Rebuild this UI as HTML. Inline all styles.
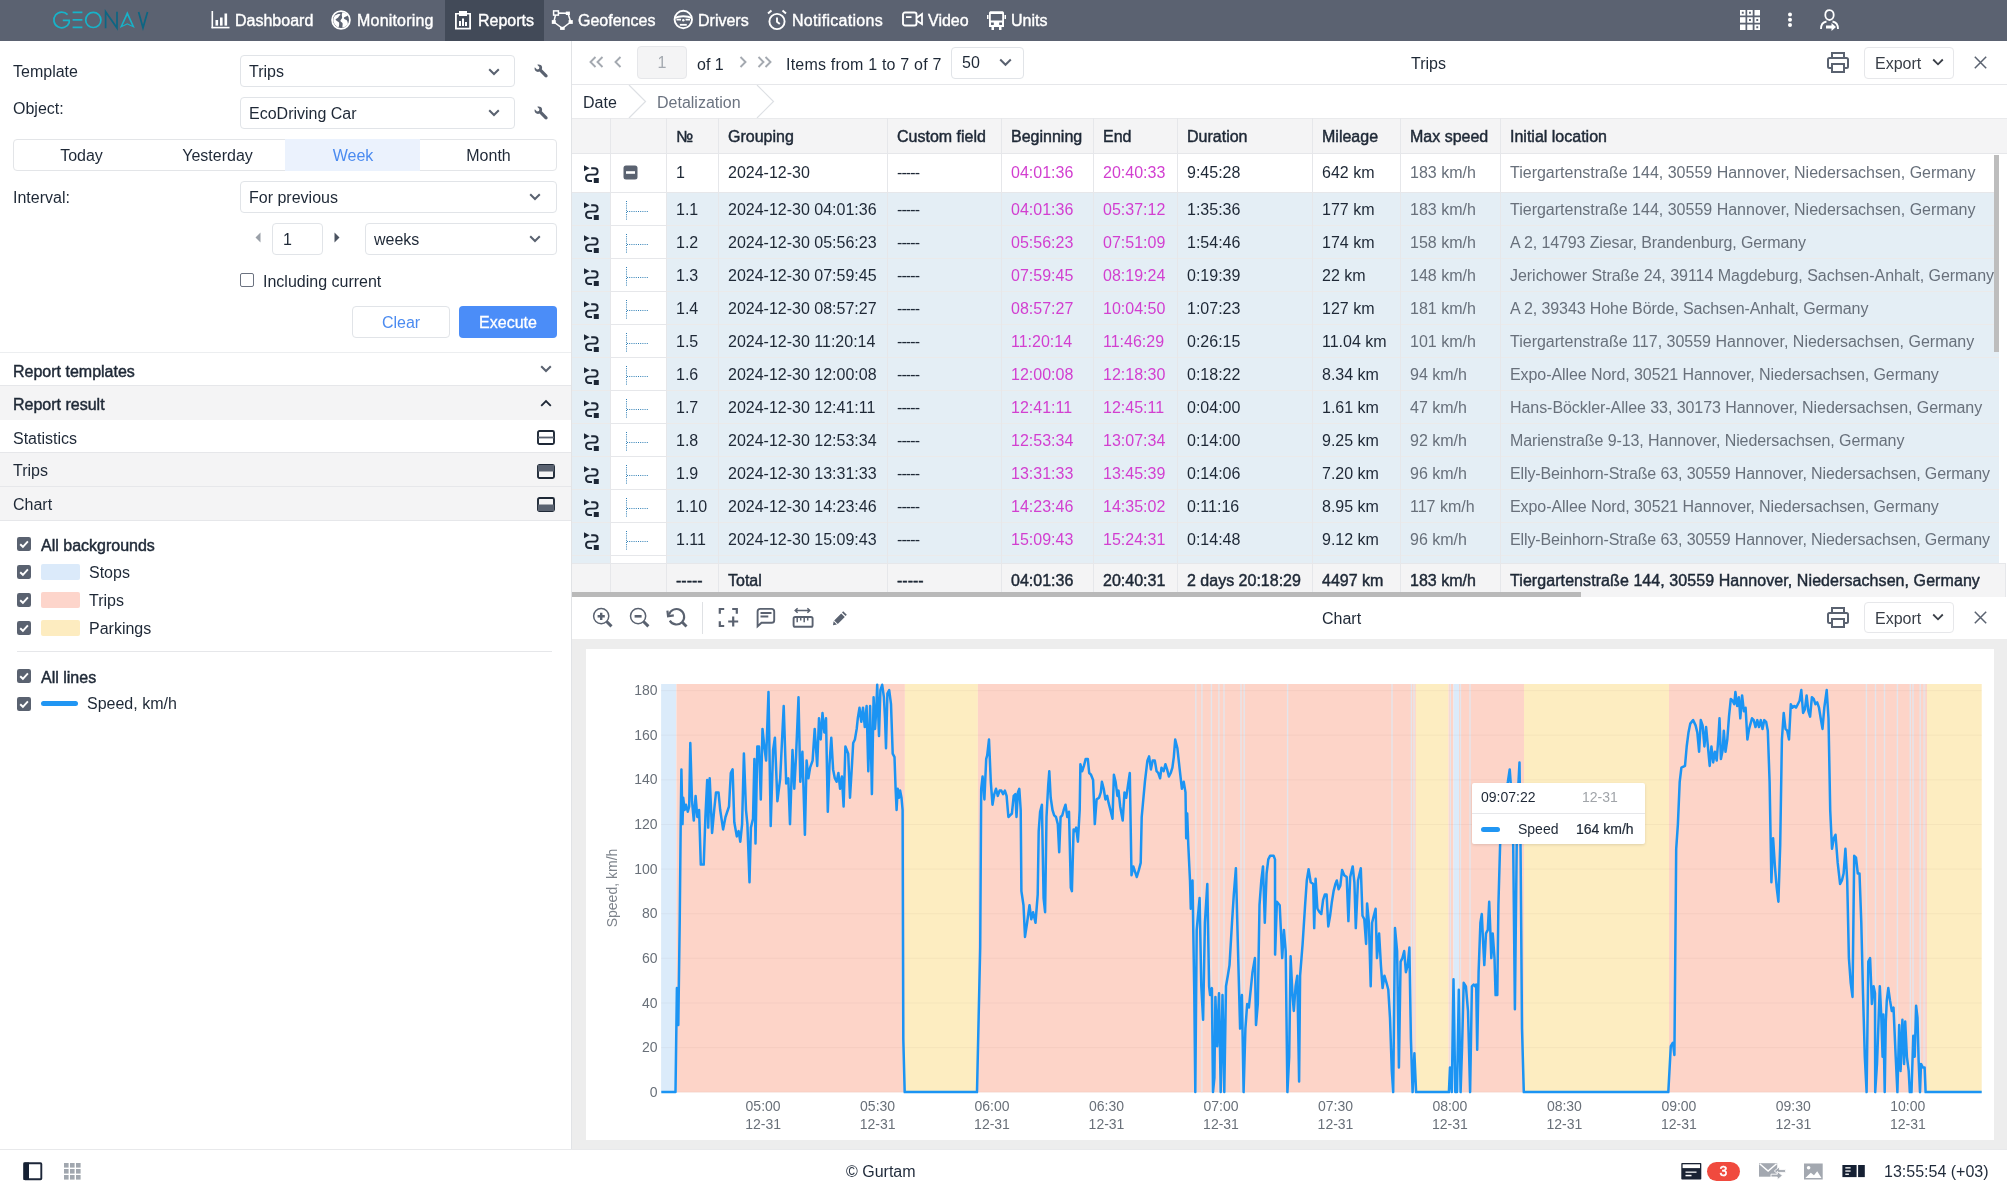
<!DOCTYPE html>
<html><head><meta charset="utf-8"><title>Reports</title>
<style>
*{box-sizing:border-box;margin:0;padding:0}
html,body{width:2007px;height:1192px;overflow:hidden;background:#fff;font-family:"Liberation Sans",sans-serif;color:#1e2836;font-size:16px}
.a{position:absolute}
.t{position:absolute;white-space:nowrap}
svg{display:block}
body{will-change:transform}
/* top bar */
#top{left:0;top:0;width:2007px;height:41px;background:#5b6271}
#top .nav{color:#fff;font-size:16px;height:41px;line-height:41px}
#rep{left:445px;top:0;width:99px;height:41px;background:#424a58}
/* left panel */
#left{left:0;top:41px;width:572px;height:1108px;background:#fff;border-right:1px solid #e1e3e6}
.lbl{font-size:16px;color:#1e2836;line-height:20px}
.sel{border:1px solid #e1e4e8;border-radius:4px;background:#fff}
.sel .v{position:absolute;left:8px;top:1px;line-height:30px;font-size:16px}
.chev{position:absolute;width:12px;height:8px}
.row{position:absolute;left:0;width:571px;line-height:33px;font-size:16px;padding-left:13px}
.cb{position:absolute;width:14px;height:14px;border-radius:2px;background:#5a6270}
/* right */
.hd{position:absolute;top:118px;height:36px;background:#f4f4f5;border-right:1px solid #e6e7ea;border-bottom:1px solid #e6e7ea;font-weight:bold;line-height:35px;padding-left:10px;color:#1e2836}
</style></head><body>

<!-- TOP BAR -->
<div id="top" class="a"></div>
<div id="rep" class="a"></div>
<!-- logo -->
<svg class="a" style="left:0;top:0" width="160" height="41" viewBox="0 0 160 41">
 <g fill="none" stroke-width="1.7">
  <path d="M67.6 14.6 A7.9 7.9 0 1 0 69.2 22.6 V20.4 H62.8" stroke="#17b3c9"/>
  <path d="M72.6 12.4 H82.4 M72.6 19.9 H82.4 M72.6 27.3 H82.4" stroke="#17b3c9"/>
  <circle cx="93.3" cy="19.9" r="7.6" stroke="#17b3c9"/>
  <path d="M105.6 28.2 V11.7 L117 28 V11.7" stroke="#0c6683"/>
  <path d="M138.6 11.9 L143 27.8 L147.5 11.9" stroke="#0c6683"/>
 </g>
 <path d="M127.3 11.3 L134.8 28.1 L127.3 24.6 L119.8 28.1 Z M127.3 15.6 L122.6 25.6 L127.3 23.3 L132 25.6 Z" fill="#17b3c9" fill-rule="evenodd"/>
</svg>
<!-- nav icons -->
<svg class="a" style="left:211px;top:11px" width="19" height="18" viewBox="0 0 19 18" fill="#fff">
 <rect x="0.5" y="0" width="1.6" height="17.2"/><rect x="0.5" y="15.8" width="18" height="1.6"/>
 <rect x="4.5" y="9" width="2.6" height="5.6"/><rect x="9" y="6.5" width="2.6" height="8.1"/><rect x="13.5" y="2.5" width="2.6" height="12.1"/>
</svg>
<div class="t nav" style="left:235px;top:0;color:#fff;line-height:41px;-webkit-text-stroke:0.4px #fff">Dashboard</div>
<svg class="a" style="left:331px;top:10px" width="20" height="20" viewBox="0 0 20 20">
 <circle cx="10" cy="10" r="8.9" fill="none" stroke="#fff" stroke-width="1.8"/>
 <path d="M4 5.5 C6 4 8 3.5 9.5 4.2 C9 5.5 8 6 7.2 7.5 C6.5 8.5 5 8.5 4.5 9.8 C5.5 11 7 11.5 8 12.5 C8.5 14 8 16 7.5 17.5 C5 16.5 3 14 2.3 11 C2.2 9 2.8 7 4 5.5 Z M11.5 2.2 C13.5 2.5 15.5 3.5 16.8 5.2 C16 6.5 14 6.5 13 7.5 C12.2 8.5 14 9.5 15.5 10 C16.5 11 17 12.5 16.8 14.5 C15.5 16 13.5 17.2 11.5 17.6 C11.2 16 12 14.5 11.5 13 C10.5 12 9 11.5 9.5 10.2 C10.5 9 11.5 8.2 11 6.5 C10.5 5 11 3.5 11.5 2.2 Z" fill="#fff"/>
</svg>
<div class="t nav" style="left:357px;top:0;color:#fff;line-height:41px;-webkit-text-stroke:0.4px #fff;letter-spacing:0.2px">Monitoring</div>
<svg class="a" style="left:454px;top:10px" width="18" height="20" viewBox="0 0 18 20" fill="#fff">
 <path d="M1 3 H5 V1 H13 V3 H17 V19.5 H1 Z M2.8 4.6 V17.8 H15.2 V4.6 H13 V6 H5 V4.6 Z" fill-rule="evenodd"/>
 <rect x="5" y="11" width="2" height="5"/><rect x="8" y="8.5" width="2" height="7.5"/><rect x="11" y="12" width="2" height="4"/>
</svg>
<div class="t nav" style="left:478px;top:0;color:#fff;line-height:41px;-webkit-text-stroke:0.4px #fff">Reports</div>
<svg class="a" style="left:540px;top:0" width="40" height="41" viewBox="540 0 40 41">
 <path d="M556 13 L568 13.3 L570.7 22 L562.4 28.4 L553.8 22 Z" fill="none" stroke="#fff" stroke-width="1.5"/>
 <rect x="553.6" y="10.9" width="4.8" height="4.2" fill="#5b6271" stroke="#fff" stroke-width="1.5"/>
 <rect x="565.8" y="11.6" width="4.1" height="3.4" fill="#fff"/>
 <rect x="568.6" y="20.1" width="4.2" height="3.8" fill="#fff"/>
 <rect x="560.1" y="26.8" width="4.6" height="3.1" fill="#fff"/>
 <rect x="551.8" y="20.1" width="4" height="3.8" fill="#fff"/>
</svg>
<div class="t nav" style="left:578px;top:0;color:#fff;line-height:41px;-webkit-text-stroke:0.4px #fff">Geofences</div>
<svg class="a" style="left:670px;top:6px" width="26" height="26" viewBox="670 6 26 26">
 <circle cx="683.3" cy="19.5" r="8.7" fill="none" stroke="#fff" stroke-width="1.9"/>
 <path d="M675 17.8 C679 15.6 687.6 15.6 691.6 17.8" fill="none" stroke="#fff" stroke-width="2"/>
 <path d="M676.5 19.6 H681 M685.6 19.6 H690" stroke="#fff" stroke-width="1.6"/>
 <circle cx="683.3" cy="20.3" r="1.2" fill="#fff"/>
 <path d="M679.8 24.8 H686.8" stroke="#fff" stroke-width="1.8"/>
</svg>
<div class="t nav" style="left:698px;top:0;color:#fff;line-height:41px;-webkit-text-stroke:0.4px #fff">Drivers</div>
<svg class="a" style="left:767px;top:9px" width="20" height="22" viewBox="0 0 20 22">
 <circle cx="10" cy="12.5" r="7.6" fill="none" stroke="#fff" stroke-width="1.9"/>
 <path d="M10 8.5 V12.8 L12.8 15" fill="none" stroke="#fff" stroke-width="1.9"/>
 <path d="M1 4.5 L4.5 1.5 M19 4.5 L15.5 1.5" stroke="#fff" stroke-width="2"/>
</svg>
<div class="t nav" style="left:792px;top:0;color:#fff;line-height:41px;-webkit-text-stroke:0.4px #fff;letter-spacing:0.3px">Notifications</div>
<svg class="a" style="left:902px;top:11px" width="21" height="17" viewBox="0 0 21 17">
 <rect x="1" y="1.5" width="13.5" height="13" rx="2" fill="none" stroke="#fff" stroke-width="1.9"/>
 <path d="M14.5 7 L20 3 V13 L14.5 9.5" fill="none" stroke="#fff" stroke-width="1.8"/>
 <rect x="4" y="5.2" width="5.5" height="1.8" fill="#fff"/>
</svg>
<div class="t nav" style="left:928px;top:0;color:#fff;line-height:41px;-webkit-text-stroke:0.4px #fff">Video</div>
<svg class="a" style="left:987px;top:11px" width="19" height="20" viewBox="0 0 19 20" fill="#fff">
 <path d="M2 2 C2 0.8 3 0.3 4 0.3 H15 C16 0.3 17 0.8 17 2 V16 H14.5 V19 H12 V16 H7 V19 H4.5 V16 H2 Z M3.8 3 V9.5 H15.2 V3 Z M4 11.5 V14 H6.8 V11.5 Z M12.2 11.5 V14 H15 V11.5 Z" fill-rule="evenodd"/>
 <rect x="0" y="4" width="1.5" height="4"/><rect x="17.5" y="4" width="1.5" height="4"/>
</svg>
<div class="t nav" style="left:1011px;top:0;color:#fff;line-height:41px;-webkit-text-stroke:0.4px #fff">Units</div>
<!-- right icons -->
<svg class="a" style="left:1740px;top:10px" width="20" height="20" viewBox="0 0 20 20" fill="#fff">
 <path d="M0 0H5.5V5.5H0Z M1.8 1.8V3.7H3.7V1.8Z" fill-rule="evenodd"/>
 <path d="M7.2 0H12.7V5.5H7.2Z M9 1.8V3.7H10.9V1.8Z" fill-rule="evenodd"/>
 <rect x="14.5" y="0" width="5.5" height="5.5"/>
 <rect x="0" y="7.2" width="5.5" height="5.5"/>
 <path d="M7.2 7.2H12.7V12.7H7.2Z M9 9V10.9H10.9V9Z" fill-rule="evenodd"/>
 <path d="M14.5 7.2H20V12.7H14.5Z M16.3 9V10.9H18.2V9Z" fill-rule="evenodd"/>
 <rect x="0" y="14.5" width="5.5" height="5.5"/>
 <rect x="7.2" y="14.5" width="5.5" height="5.5"/>
 <path d="M14.5 14.5H20V20H14.5Z M16.3 16.3V18.2H18.2V16.3Z" fill-rule="evenodd"/>
</svg>
<svg class="a" style="left:1787px;top:12px" width="6" height="18" viewBox="0 0 6 18" fill="#fff">
 <circle cx="3" cy="2.5" r="2"/><circle cx="3" cy="7.8" r="2"/><circle cx="3" cy="13" r="2"/>
</svg>
<svg class="a" style="left:1820px;top:9px" width="19" height="23" viewBox="0 0 19 23">
 <path d="M9.5 1.2 C6.8 1.2 5.3 3.2 5.3 6 C5.3 8.8 7 11 9.5 11 C12 11 13.7 8.8 13.7 6 C13.7 3.2 12.2 1.2 9.5 1.2 Z" fill="none" stroke="#fff" stroke-width="1.8"/>
 <path d="M1 20 C1 15.5 3.5 13 6.5 12.5 M18 20 C18 15.5 15.5 13 12.5 12.5" fill="none" stroke="#fff" stroke-width="1.8"/>
 <path d="M6 16.5 H11.5 V14 L16 18 L11.5 22 V19.5 H6 Z" fill="#fff"/>
</svg>

<!-- LEFT PANEL -->
<div id="left" class="a"></div>
<div class="t lbl" style="left:13px;top:62px">Template</div>
<div class="a sel" style="left:240px;top:55px;width:275px;height:32px"><div class="v">Trips</div></div>
<svg class="a" style="left:488px;top:68px" width="12" height="8" viewBox="0 0 12 8"><path d="M1.2 1.2 L6 6 L10.8 1.2" fill="none" stroke="#5a6270" stroke-width="2"/></svg>
<svg class="a" style="left:534px;top:64px" width="14" height="14" viewBox="0 0 14 14"><path transform="translate(14 0) scale(-1 1)" d="M13.2 3.2 L11 5.4 L9 5 L8.6 3 L10.8 0.8 C9 0 6.8 0.6 6.1 2.4 C5.7 3.4 5.8 4.4 6.2 5.3 L0.8 10.7 C0.2 11.3 0.2 12.4 0.8 13 C1.4 13.6 2.5 13.6 3.1 13 L8.5 7.6 C9.4 8 10.5 8.1 11.5 7.6 C13.2 6.8 13.8 4.8 13.2 3.2 Z" fill="#5a6270"/></svg>
<div class="t lbl" style="left:13px;top:99px">Object:</div>
<div class="a sel" style="left:240px;top:97px;width:275px;height:32px"><div class="v">EcoDriving Car</div></div>
<svg class="a" style="left:488px;top:109px" width="12" height="8" viewBox="0 0 12 8"><path d="M1.2 1.2 L6 6 L10.8 1.2" fill="none" stroke="#5a6270" stroke-width="2"/></svg>
<svg class="a" style="left:534px;top:106px" width="14" height="14" viewBox="0 0 14 14"><path transform="translate(14 0) scale(-1 1)" d="M13.2 3.2 L11 5.4 L9 5 L8.6 3 L10.8 0.8 C9 0 6.8 0.6 6.1 2.4 C5.7 3.4 5.8 4.4 6.2 5.3 L0.8 10.7 C0.2 11.3 0.2 12.4 0.8 13 C1.4 13.6 2.5 13.6 3.1 13 L8.5 7.6 C9.4 8 10.5 8.1 11.5 7.6 C13.2 6.8 13.8 4.8 13.2 3.2 Z" fill="#5a6270"/></svg>
<!-- period segmented -->
<div class="a" style="left:13px;top:139px;width:544px;height:32px;border:1px solid #e3e5e8;border-radius:4px;background:#fff"></div>
<div class="a" style="left:285px;top:139px;width:135px;height:32px;background:#ebf2fd"></div>
<div class="t lbl" style="left:13px;top:145px;width:137px;text-align:center;line-height:22px">Today</div>
<div class="t lbl" style="left:149px;top:145px;width:137px;text-align:center;line-height:22px">Yesterday</div>
<div class="t lbl" style="left:286px;top:145px;width:134px;text-align:center;line-height:22px;color:#4b8bf0">Week</div>
<div class="t lbl" style="left:420px;top:145px;width:137px;text-align:center;line-height:22px">Month</div>
<div class="t lbl" style="left:13px;top:188px">Interval:</div>
<div class="a sel" style="left:240px;top:181px;width:317px;height:32px"><div class="v">For previous</div></div>
<svg class="a" style="left:529px;top:193px" width="12" height="8" viewBox="0 0 12 8"><path d="M1.2 1.2 L6 6 L10.8 1.2" fill="none" stroke="#5a6270" stroke-width="2"/></svg>
<svg class="a" style="left:255px;top:232px" width="6" height="11" viewBox="0 0 6 11"><path d="M5.5 0.5 V10.5 L0.5 5.5 Z" fill="#9aa0a8"/></svg>
<div class="a sel" style="left:272px;top:223px;width:51px;height:32px"><div class="v" style="left:10px">1</div></div>
<svg class="a" style="left:334px;top:232px" width="6" height="11" viewBox="0 0 6 11"><path d="M0.5 0.5 V10.5 L5.5 5.5 Z" fill="#4a5260"/></svg>
<div class="a sel" style="left:365px;top:223px;width:192px;height:32px"><div class="v">weeks</div></div>
<svg class="a" style="left:529px;top:235px" width="12" height="8" viewBox="0 0 12 8"><path d="M1.2 1.2 L6 6 L10.8 1.2" fill="none" stroke="#5a6270" stroke-width="2"/></svg>
<div class="a" style="left:240px;top:273px;width:14px;height:14px;border:1.5px solid #6b7280;border-radius:2px"></div>
<div class="t lbl" style="left:263px;top:272px">Including current</div>
<div class="a" style="left:352px;top:306px;width:98px;height:32px;border:1px solid #e1e4e8;border-radius:4px;text-align:center;line-height:32px;color:#4b8bf0">Clear</div>
<div class="a" style="left:459px;top:306px;width:98px;height:32px;border-radius:4px;background:#4b8df8;text-align:center;line-height:34px;color:#fff;-webkit-text-stroke:0.3px #fff">Execute</div>
<div class="a" style="left:0;top:352px;width:571px;height:1px;background:#eceef0"></div>
<!-- accordion -->
<div class="row" style="top:353px;height:33px;padding-top:2px;background:#fff;border-bottom:1px solid #e6e7ea;-webkit-text-stroke:0.45px #1e2836">Report templates</div>
<svg class="a" style="left:540px;top:365px" width="12" height="8" viewBox="0 0 12 8"><path d="M1.2 1.2 L6 6 L10.8 1.2" fill="none" stroke="#5a6270" stroke-width="2"/></svg>
<div class="row" style="top:386px;height:34px;padding-top:2px;background:#f4f4f5;-webkit-text-stroke:0.45px #1e2836">Report result</div>
<svg class="a" style="left:540px;top:399px" width="12" height="8" viewBox="0 0 12 8"><path d="M1.2 6.8 L6 2 L10.8 6.8" fill="none" stroke="#1e2836" stroke-width="1.8"/></svg>
<div class="row" style="top:420px;height:33px;padding-top:2px;background:#fff;border-bottom:1px solid #e6e7ea">Statistics</div>
<svg class="a" style="left:537px;top:430px" width="18" height="15" viewBox="0 0 18 15"><rect x="1" y="1" width="16" height="13" rx="1.5" fill="none" stroke="#1e2836" stroke-width="1.9"/><rect x="1" y="6.6" width="16" height="1.8" fill="#5a6270"/></svg>
<div class="row" style="top:453px;height:34px;padding-top:1px;background:#f4f4f5;border-bottom:1px solid #e6e7ea">Trips</div>
<svg class="a" style="left:537px;top:464px" width="18" height="15" viewBox="0 0 18 15"><rect x="1" y="1" width="16" height="13" rx="1.5" fill="none" stroke="#1e2836" stroke-width="1.9"/><rect x="1" y="1" width="16" height="6.5" fill="#5a6270"/></svg>
<div class="row" style="top:487px;height:34px;padding-top:1px;background:#f4f4f5;border-bottom:1px solid #e6e7ea">Chart</div>
<svg class="a" style="left:537px;top:497px" width="18" height="15" viewBox="0 0 18 15"><rect x="1" y="1" width="16" height="13" rx="1.5" fill="none" stroke="#1e2836" stroke-width="1.9"/><rect x="1" y="7.5" width="16" height="6.5" fill="#5a6270"/></svg>
<!-- legend -->
<svg class="a" style="left:17px;top:537px" width="14" height="14" viewBox="0 0 14 14"><rect width="14" height="14" rx="2.2" fill="#5a6270"/><path d="M3.2 7.2 L5.9 9.8 L10.9 4.4" fill="none" stroke="#fff" stroke-width="1.9"/></svg>
<div class="t lbl" style="left:41px;top:536px;-webkit-text-stroke:0.45px #1e2836">All backgrounds</div>
<svg class="a" style="left:17px;top:565px" width="14" height="14" viewBox="0 0 14 14"><rect width="14" height="14" rx="2.2" fill="#5a6270"/><path d="M3.2 7.2 L5.9 9.8 L10.9 4.4" fill="none" stroke="#fff" stroke-width="1.9"/></svg>
<div class="a" style="left:41px;top:564px;width:39px;height:16px;border-radius:2px;background:#dbeafa"></div>
<div class="t lbl" style="left:89px;top:563px">Stops</div>
<svg class="a" style="left:17px;top:593px" width="14" height="14" viewBox="0 0 14 14"><rect width="14" height="14" rx="2.2" fill="#5a6270"/><path d="M3.2 7.2 L5.9 9.8 L10.9 4.4" fill="none" stroke="#fff" stroke-width="1.9"/></svg>
<div class="a" style="left:41px;top:592px;width:39px;height:16px;border-radius:2px;background:#fdd5cb"></div>
<div class="t lbl" style="left:89px;top:591px">Trips</div>
<svg class="a" style="left:17px;top:621px" width="14" height="14" viewBox="0 0 14 14"><rect width="14" height="14" rx="2.2" fill="#5a6270"/><path d="M3.2 7.2 L5.9 9.8 L10.9 4.4" fill="none" stroke="#fff" stroke-width="1.9"/></svg>
<div class="a" style="left:41px;top:620px;width:39px;height:16px;border-radius:2px;background:#fdecc0"></div>
<div class="t lbl" style="left:89px;top:619px">Parkings</div>
<div class="a" style="left:17px;top:651px;width:535px;height:1px;background:#e6e7ea"></div>
<svg class="a" style="left:17px;top:669px" width="14" height="14" viewBox="0 0 14 14"><rect width="14" height="14" rx="2.2" fill="#5a6270"/><path d="M3.2 7.2 L5.9 9.8 L10.9 4.4" fill="none" stroke="#fff" stroke-width="1.9"/></svg>
<div class="t lbl" style="left:41px;top:668px;-webkit-text-stroke:0.45px #1e2836">All lines</div>
<svg class="a" style="left:17px;top:697px" width="14" height="14" viewBox="0 0 14 14"><rect width="14" height="14" rx="2.2" fill="#5a6270"/><path d="M3.2 7.2 L5.9 9.8 L10.9 4.4" fill="none" stroke="#fff" stroke-width="1.9"/></svg>
<div class="a" style="left:41px;top:701px;width:37px;height:5px;border-radius:3px;background:#2196f3"></div>
<div class="t lbl" style="left:87px;top:694px">Speed, km/h</div>

<!-- RIGHT PANEL -->
<div class="a" style="left:572px;top:84px;width:1435px;height:1px;background:#e6e7ea"></div>
<svg class="a" style="left:588px;top:56px" width="17" height="12" viewBox="0 0 17 12"><path d="M7.5 1 L2.5 6 L7.5 11 M14.5 1 L9.5 6 L14.5 11" fill="none" stroke="#a4a9b0" stroke-width="1.9"/></svg>
<svg class="a" style="left:613px;top:56px" width="10" height="12" viewBox="0 0 10 12"><path d="M7.5 1 L2.5 6 L7.5 11" fill="none" stroke="#a4a9b0" stroke-width="1.9"/></svg>
<div class="a" style="left:637px;top:46px;width:50px;height:33px;background:#f4f4f5;border:1px solid #e6e7ea;border-radius:4px;text-align:center;line-height:32px;color:#a4a9b0">1</div>
<div class="t" style="left:697px;top:55px;line-height:20px">of 1</div>
<svg class="a" style="left:738px;top:56px" width="10" height="12" viewBox="0 0 10 12"><path d="M2.5 1 L7.5 6 L2.5 11" fill="none" stroke="#a4a9b0" stroke-width="1.9"/></svg>
<svg class="a" style="left:756px;top:56px" width="17" height="12" viewBox="0 0 17 12"><path d="M2.5 1 L7.5 6 L2.5 11 M9.5 1 L14.5 6 L9.5 11" fill="none" stroke="#a4a9b0" stroke-width="1.9"/></svg>
<div class="t" style="left:786px;top:55px;line-height:20px;letter-spacing:0.2px">Items from 1 to 7 of 7</div>
<div class="a sel" style="left:951px;top:47px;width:73px;height:32px"><div class="v" style="left:10px;top:0">50</div></div>
<svg class="a" style="left:999px;top:58px" width="13" height="9" viewBox="0 0 13 9"><path d="M1.2 1.5 L6.5 6.8 L11.8 1.5" fill="none" stroke="#5a6270" stroke-width="2"/></svg>
<div class="t" style="left:1411px;top:54px;line-height:20px">Trips</div>
<svg class="a" style="left:1827px;top:52px" width="22" height="21" viewBox="0 0 22 21"><path d="M5 6 V1 H17 V6" fill="none" stroke="#5a6270" stroke-width="2"/><path d="M4.5 16 H2.5 C1.5 16 1 15.5 1 14.5 V7.5 C1 6.5 1.5 6 2.5 6 H19.5 C20.5 6 21 6.5 21 7.5 V14.5 C21 15.5 20.5 16 19.5 16 H17.5" fill="none" stroke="#5a6270" stroke-width="2"/><rect x="5" y="12" width="12" height="8" fill="none" stroke="#5a6270" stroke-width="2"/></svg>
<div class="a" style="left:1864px;top:47px;width:90px;height:32px;border:1px solid #e6e7ea;border-radius:4px"></div>
<div class="t" style="left:1875px;top:54px;line-height:20px;color:#383e47">Export</div>
<svg class="a" style="left:1932px;top:58px" width="12" height="9" viewBox="0 0 12 9"><path d="M1.2 1.5 L6 6.3 L10.8 1.5" fill="none" stroke="#3a3f47" stroke-width="1.8"/></svg>
<svg class="a" style="left:1974px;top:56px" width="13" height="13" viewBox="0 0 13 13"><path d="M0.8 0.8 L12.2 12.2 M12.2 0.8 L0.8 12.2" stroke="#5a6270" stroke-width="1.5"/></svg>
<div class="t" style="left:583px;top:93px;line-height:20px">Date</div>
<svg class="a" style="left:628px;top:85px" width="20" height="33" viewBox="0 0 20 33"><path d="M1 0 L17.5 16.5 L1 33" fill="none" stroke="#dde0e4" stroke-width="1.2"/></svg>
<div class="t" style="left:657px;top:93px;line-height:20px;color:#6b7380">Detalization</div>
<svg class="a" style="left:756px;top:85px" width="20" height="33" viewBox="0 0 20 33"><path d="M1 0 L17.5 16.5 L1 33" fill="none" stroke="#dde0e4" stroke-width="1.2"/></svg>
<div class="a" style="left:572px;top:118px;width:1435px;height:36px;background:#f4f4f5;border-top:1px solid #e9eaec;border-bottom:1px solid #e6e7ea"></div>
<div class="a" style="left:610px;top:118px;width:1px;height:36px;background:#e6e7ea"></div>
<div class="a" style="left:666px;top:118px;width:1px;height:36px;background:#e6e7ea"></div>
<div class="t" style="left:676px;top:127px;line-height:20px;-webkit-text-stroke:0.45px #1e2836">№</div>
<div class="a" style="left:718px;top:118px;width:1px;height:36px;background:#e6e7ea"></div>
<div class="t" style="left:728px;top:127px;line-height:20px;-webkit-text-stroke:0.45px #1e2836">Grouping</div>
<div class="a" style="left:887px;top:118px;width:1px;height:36px;background:#e6e7ea"></div>
<div class="t" style="left:897px;top:127px;line-height:20px;-webkit-text-stroke:0.45px #1e2836">Custom field</div>
<div class="a" style="left:1001px;top:118px;width:1px;height:36px;background:#e6e7ea"></div>
<div class="t" style="left:1011px;top:127px;line-height:20px;-webkit-text-stroke:0.45px #1e2836">Beginning</div>
<div class="a" style="left:1093px;top:118px;width:1px;height:36px;background:#e6e7ea"></div>
<div class="t" style="left:1103px;top:127px;line-height:20px;-webkit-text-stroke:0.45px #1e2836">End</div>
<div class="a" style="left:1177px;top:118px;width:1px;height:36px;background:#e6e7ea"></div>
<div class="t" style="left:1187px;top:127px;line-height:20px;-webkit-text-stroke:0.45px #1e2836">Duration</div>
<div class="a" style="left:1312px;top:118px;width:1px;height:36px;background:#e6e7ea"></div>
<div class="t" style="left:1322px;top:127px;line-height:20px;-webkit-text-stroke:0.45px #1e2836">Mileage</div>
<div class="a" style="left:1400px;top:118px;width:1px;height:36px;background:#e6e7ea"></div>
<div class="t" style="left:1410px;top:127px;line-height:20px;-webkit-text-stroke:0.45px #1e2836">Max speed</div>
<div class="a" style="left:1500px;top:118px;width:1px;height:36px;background:#e6e7ea"></div>
<div class="t" style="left:1510px;top:127px;line-height:20px;-webkit-text-stroke:0.45px #1e2836">Initial location</div>
<div class="a" style="left:572px;top:154px;width:1427px;height:39px;background:#fff;border-bottom:1px solid #e6e7ea"></div>
<div class="a" style="left:610px;top:154px;width:1px;height:39px;background:#e6e7ea"></div>
<div class="a" style="left:666px;top:154px;width:1px;height:39px;background:#e6e7ea"></div>
<div class="a" style="left:718px;top:154px;width:1px;height:39px;background:#e6e7ea"></div>
<div class="a" style="left:887px;top:154px;width:1px;height:39px;background:#e6e7ea"></div>
<div class="a" style="left:1001px;top:154px;width:1px;height:39px;background:#e6e7ea"></div>
<div class="a" style="left:1093px;top:154px;width:1px;height:39px;background:#e6e7ea"></div>
<div class="a" style="left:1177px;top:154px;width:1px;height:39px;background:#e6e7ea"></div>
<div class="a" style="left:1312px;top:154px;width:1px;height:39px;background:#e6e7ea"></div>
<div class="a" style="left:1400px;top:154px;width:1px;height:39px;background:#e6e7ea"></div>
<div class="a" style="left:1500px;top:154px;width:1px;height:39px;background:#e6e7ea"></div>
<svg class="a" style="left:583px;top:165px" width="17" height="18" viewBox="0 0 17 18"><path d="M1 0.3 L6.6 3.3 L1 6.3 Z" fill="#1d2736"/><path d="M8.2 3.2 H11.3 C13.6 3.2 14.6 4.8 14.6 6.4 C14.6 8.2 13.4 9.6 11.3 9.6 H6.2 C4.2 9.6 3 11 3 12.8 C3 14.6 4.2 16 6.2 16 H9" fill="none" stroke="#1d2736" stroke-width="1.9"/><rect x="10.8" y="13" width="5" height="5" fill="#1d2736"/></svg>
<svg class="a" style="left:623px;top:165px" width="15" height="15" viewBox="0 0 15 15"><rect x="0.5" y="0.5" width="14" height="14" rx="2.5" fill="#5a6270"/><rect x="3" y="6.2" width="9" height="2.6" fill="#fff"/></svg>
<div class="t" style="left:676px;top:163px;line-height:20px;color:#1e2836">1</div>
<div class="t" style="left:728px;top:163px;line-height:20px;color:#1e2836">2024-12-30</div>
<div class="t" style="left:897px;top:163px;line-height:20px;color:#1e2836;letter-spacing:-0.9px">-----</div>
<div class="t" style="left:1011px;top:163px;line-height:20px;color:#d23fd0">04:01:36</div>
<div class="t" style="left:1103px;top:163px;line-height:20px;color:#d23fd0">20:40:33</div>
<div class="t" style="left:1187px;top:163px;line-height:20px;color:#1e2836">9:45:28</div>
<div class="t" style="left:1322px;top:163px;line-height:20px;color:#1e2836">642 km</div>
<div class="t" style="left:1410px;top:163px;line-height:20px;color:#68707b">183 km/h</div>
<div class="t" style="left:1510px;top:163px;line-height:20px;color:#68707b">Tiergartenstraße 144, 30559 Hannover, Niedersachsen, Germany</div>
<div class="a" style="left:572px;top:193px;width:1427px;height:33px;background:#e4eef5;border-bottom:1px solid #ebeaea"></div>
<div class="a" style="left:610px;top:193px;width:56px;height:33px;background:#fff;border-bottom:1px solid #e6e7ea"></div>
<div class="a" style="left:610px;top:193px;width:1px;height:33px;background:#e6e7ea"></div>
<div class="a" style="left:666px;top:193px;width:1px;height:33px;background:#e6e7ea"></div>
<div class="a" style="left:718px;top:193px;width:1px;height:33px;background:#e6e7ea"></div>
<div class="a" style="left:887px;top:193px;width:1px;height:33px;background:#e6e7ea"></div>
<div class="a" style="left:1001px;top:193px;width:1px;height:33px;background:#e6e7ea"></div>
<div class="a" style="left:1093px;top:193px;width:1px;height:33px;background:#e6e7ea"></div>
<div class="a" style="left:1177px;top:193px;width:1px;height:33px;background:#e6e7ea"></div>
<div class="a" style="left:1312px;top:193px;width:1px;height:33px;background:#e6e7ea"></div>
<div class="a" style="left:1400px;top:193px;width:1px;height:33px;background:#e6e7ea"></div>
<div class="a" style="left:1500px;top:193px;width:1px;height:33px;background:#e6e7ea"></div>
<svg class="a" style="left:583px;top:202px" width="17" height="18" viewBox="0 0 17 18"><path d="M1 0.3 L6.6 3.3 L1 6.3 Z" fill="#1d2736"/><path d="M8.2 3.2 H11.3 C13.6 3.2 14.6 4.8 14.6 6.4 C14.6 8.2 13.4 9.6 11.3 9.6 H6.2 C4.2 9.6 3 11 3 12.8 C3 14.6 4.2 16 6.2 16 H9" fill="none" stroke="#1d2736" stroke-width="1.9"/><rect x="10.8" y="13" width="5" height="5" fill="#1d2736"/></svg>
<svg class="a" style="left:625px;top:201px" width="25" height="19" viewBox="0 0 25 19"><path d="M1.5 0 V19 M2 10.5 H24" fill="none" stroke="#2f7fb5" stroke-width="1" stroke-dasharray="1 1.2"/></svg>
<div class="t" style="left:676px;top:200px;line-height:20px;color:#1e2836">1.1</div>
<div class="t" style="left:728px;top:200px;line-height:20px;color:#1e2836">2024-12-30 04:01:36</div>
<div class="t" style="left:897px;top:200px;line-height:20px;color:#1e2836;letter-spacing:-0.9px">-----</div>
<div class="t" style="left:1011px;top:200px;line-height:20px;color:#d23fd0">04:01:36</div>
<div class="t" style="left:1103px;top:200px;line-height:20px;color:#d23fd0">05:37:12</div>
<div class="t" style="left:1187px;top:200px;line-height:20px;color:#1e2836">1:35:36</div>
<div class="t" style="left:1322px;top:200px;line-height:20px;color:#1e2836">177 km</div>
<div class="t" style="left:1410px;top:200px;line-height:20px;color:#68707b">183 km/h</div>
<div class="t" style="left:1510px;top:200px;line-height:20px;color:#68707b">Tiergartenstraße 144, 30559 Hannover, Niedersachsen, Germany</div>
<div class="a" style="left:572px;top:226px;width:1427px;height:33px;background:#e4eef5;border-bottom:1px solid #ebeaea"></div>
<div class="a" style="left:610px;top:226px;width:56px;height:33px;background:#fff;border-bottom:1px solid #e6e7ea"></div>
<div class="a" style="left:610px;top:226px;width:1px;height:33px;background:#e6e7ea"></div>
<div class="a" style="left:666px;top:226px;width:1px;height:33px;background:#e6e7ea"></div>
<div class="a" style="left:718px;top:226px;width:1px;height:33px;background:#e6e7ea"></div>
<div class="a" style="left:887px;top:226px;width:1px;height:33px;background:#e6e7ea"></div>
<div class="a" style="left:1001px;top:226px;width:1px;height:33px;background:#e6e7ea"></div>
<div class="a" style="left:1093px;top:226px;width:1px;height:33px;background:#e6e7ea"></div>
<div class="a" style="left:1177px;top:226px;width:1px;height:33px;background:#e6e7ea"></div>
<div class="a" style="left:1312px;top:226px;width:1px;height:33px;background:#e6e7ea"></div>
<div class="a" style="left:1400px;top:226px;width:1px;height:33px;background:#e6e7ea"></div>
<div class="a" style="left:1500px;top:226px;width:1px;height:33px;background:#e6e7ea"></div>
<svg class="a" style="left:583px;top:235px" width="17" height="18" viewBox="0 0 17 18"><path d="M1 0.3 L6.6 3.3 L1 6.3 Z" fill="#1d2736"/><path d="M8.2 3.2 H11.3 C13.6 3.2 14.6 4.8 14.6 6.4 C14.6 8.2 13.4 9.6 11.3 9.6 H6.2 C4.2 9.6 3 11 3 12.8 C3 14.6 4.2 16 6.2 16 H9" fill="none" stroke="#1d2736" stroke-width="1.9"/><rect x="10.8" y="13" width="5" height="5" fill="#1d2736"/></svg>
<svg class="a" style="left:625px;top:234px" width="25" height="19" viewBox="0 0 25 19"><path d="M1.5 0 V19 M2 10.5 H24" fill="none" stroke="#2f7fb5" stroke-width="1" stroke-dasharray="1 1.2"/></svg>
<div class="t" style="left:676px;top:233px;line-height:20px;color:#1e2836">1.2</div>
<div class="t" style="left:728px;top:233px;line-height:20px;color:#1e2836">2024-12-30 05:56:23</div>
<div class="t" style="left:897px;top:233px;line-height:20px;color:#1e2836;letter-spacing:-0.9px">-----</div>
<div class="t" style="left:1011px;top:233px;line-height:20px;color:#d23fd0">05:56:23</div>
<div class="t" style="left:1103px;top:233px;line-height:20px;color:#d23fd0">07:51:09</div>
<div class="t" style="left:1187px;top:233px;line-height:20px;color:#1e2836">1:54:46</div>
<div class="t" style="left:1322px;top:233px;line-height:20px;color:#1e2836">174 km</div>
<div class="t" style="left:1410px;top:233px;line-height:20px;color:#68707b">158 km/h</div>
<div class="t" style="left:1510px;top:233px;line-height:20px;color:#68707b;letter-spacing:-0.12px">A 2, 14793 Ziesar, Brandenburg, Germany</div>
<div class="a" style="left:572px;top:259px;width:1427px;height:33px;background:#e4eef5;border-bottom:1px solid #ebeaea"></div>
<div class="a" style="left:610px;top:259px;width:56px;height:33px;background:#fff;border-bottom:1px solid #e6e7ea"></div>
<div class="a" style="left:610px;top:259px;width:1px;height:33px;background:#e6e7ea"></div>
<div class="a" style="left:666px;top:259px;width:1px;height:33px;background:#e6e7ea"></div>
<div class="a" style="left:718px;top:259px;width:1px;height:33px;background:#e6e7ea"></div>
<div class="a" style="left:887px;top:259px;width:1px;height:33px;background:#e6e7ea"></div>
<div class="a" style="left:1001px;top:259px;width:1px;height:33px;background:#e6e7ea"></div>
<div class="a" style="left:1093px;top:259px;width:1px;height:33px;background:#e6e7ea"></div>
<div class="a" style="left:1177px;top:259px;width:1px;height:33px;background:#e6e7ea"></div>
<div class="a" style="left:1312px;top:259px;width:1px;height:33px;background:#e6e7ea"></div>
<div class="a" style="left:1400px;top:259px;width:1px;height:33px;background:#e6e7ea"></div>
<div class="a" style="left:1500px;top:259px;width:1px;height:33px;background:#e6e7ea"></div>
<svg class="a" style="left:583px;top:268px" width="17" height="18" viewBox="0 0 17 18"><path d="M1 0.3 L6.6 3.3 L1 6.3 Z" fill="#1d2736"/><path d="M8.2 3.2 H11.3 C13.6 3.2 14.6 4.8 14.6 6.4 C14.6 8.2 13.4 9.6 11.3 9.6 H6.2 C4.2 9.6 3 11 3 12.8 C3 14.6 4.2 16 6.2 16 H9" fill="none" stroke="#1d2736" stroke-width="1.9"/><rect x="10.8" y="13" width="5" height="5" fill="#1d2736"/></svg>
<svg class="a" style="left:625px;top:267px" width="25" height="19" viewBox="0 0 25 19"><path d="M1.5 0 V19 M2 10.5 H24" fill="none" stroke="#2f7fb5" stroke-width="1" stroke-dasharray="1 1.2"/></svg>
<div class="t" style="left:676px;top:266px;line-height:20px;color:#1e2836">1.3</div>
<div class="t" style="left:728px;top:266px;line-height:20px;color:#1e2836">2024-12-30 07:59:45</div>
<div class="t" style="left:897px;top:266px;line-height:20px;color:#1e2836;letter-spacing:-0.9px">-----</div>
<div class="t" style="left:1011px;top:266px;line-height:20px;color:#d23fd0">07:59:45</div>
<div class="t" style="left:1103px;top:266px;line-height:20px;color:#d23fd0">08:19:24</div>
<div class="t" style="left:1187px;top:266px;line-height:20px;color:#1e2836">0:19:39</div>
<div class="t" style="left:1322px;top:266px;line-height:20px;color:#1e2836">22 km</div>
<div class="t" style="left:1410px;top:266px;line-height:20px;color:#68707b">148 km/h</div>
<div class="t" style="left:1510px;top:266px;line-height:20px;color:#68707b;letter-spacing:-0.035px">Jerichower Straße 24, 39114 Magdeburg, Sachsen-Anhalt, Germany</div>
<div class="a" style="left:572px;top:292px;width:1427px;height:33px;background:#e4eef5;border-bottom:1px solid #ebeaea"></div>
<div class="a" style="left:610px;top:292px;width:56px;height:33px;background:#fff;border-bottom:1px solid #e6e7ea"></div>
<div class="a" style="left:610px;top:292px;width:1px;height:33px;background:#e6e7ea"></div>
<div class="a" style="left:666px;top:292px;width:1px;height:33px;background:#e6e7ea"></div>
<div class="a" style="left:718px;top:292px;width:1px;height:33px;background:#e6e7ea"></div>
<div class="a" style="left:887px;top:292px;width:1px;height:33px;background:#e6e7ea"></div>
<div class="a" style="left:1001px;top:292px;width:1px;height:33px;background:#e6e7ea"></div>
<div class="a" style="left:1093px;top:292px;width:1px;height:33px;background:#e6e7ea"></div>
<div class="a" style="left:1177px;top:292px;width:1px;height:33px;background:#e6e7ea"></div>
<div class="a" style="left:1312px;top:292px;width:1px;height:33px;background:#e6e7ea"></div>
<div class="a" style="left:1400px;top:292px;width:1px;height:33px;background:#e6e7ea"></div>
<div class="a" style="left:1500px;top:292px;width:1px;height:33px;background:#e6e7ea"></div>
<svg class="a" style="left:583px;top:301px" width="17" height="18" viewBox="0 0 17 18"><path d="M1 0.3 L6.6 3.3 L1 6.3 Z" fill="#1d2736"/><path d="M8.2 3.2 H11.3 C13.6 3.2 14.6 4.8 14.6 6.4 C14.6 8.2 13.4 9.6 11.3 9.6 H6.2 C4.2 9.6 3 11 3 12.8 C3 14.6 4.2 16 6.2 16 H9" fill="none" stroke="#1d2736" stroke-width="1.9"/><rect x="10.8" y="13" width="5" height="5" fill="#1d2736"/></svg>
<svg class="a" style="left:625px;top:300px" width="25" height="19" viewBox="0 0 25 19"><path d="M1.5 0 V19 M2 10.5 H24" fill="none" stroke="#2f7fb5" stroke-width="1" stroke-dasharray="1 1.2"/></svg>
<div class="t" style="left:676px;top:299px;line-height:20px;color:#1e2836">1.4</div>
<div class="t" style="left:728px;top:299px;line-height:20px;color:#1e2836">2024-12-30 08:57:27</div>
<div class="t" style="left:897px;top:299px;line-height:20px;color:#1e2836;letter-spacing:-0.9px">-----</div>
<div class="t" style="left:1011px;top:299px;line-height:20px;color:#d23fd0">08:57:27</div>
<div class="t" style="left:1103px;top:299px;line-height:20px;color:#d23fd0">10:04:50</div>
<div class="t" style="left:1187px;top:299px;line-height:20px;color:#1e2836">1:07:23</div>
<div class="t" style="left:1322px;top:299px;line-height:20px;color:#1e2836">127 km</div>
<div class="t" style="left:1410px;top:299px;line-height:20px;color:#68707b">181 km/h</div>
<div class="t" style="left:1510px;top:299px;line-height:20px;color:#68707b;letter-spacing:-0.1px">A 2, 39343 Hohe Börde, Sachsen-Anhalt, Germany</div>
<div class="a" style="left:572px;top:325px;width:1427px;height:33px;background:#e4eef5;border-bottom:1px solid #ebeaea"></div>
<div class="a" style="left:610px;top:325px;width:56px;height:33px;background:#fff;border-bottom:1px solid #e6e7ea"></div>
<div class="a" style="left:610px;top:325px;width:1px;height:33px;background:#e6e7ea"></div>
<div class="a" style="left:666px;top:325px;width:1px;height:33px;background:#e6e7ea"></div>
<div class="a" style="left:718px;top:325px;width:1px;height:33px;background:#e6e7ea"></div>
<div class="a" style="left:887px;top:325px;width:1px;height:33px;background:#e6e7ea"></div>
<div class="a" style="left:1001px;top:325px;width:1px;height:33px;background:#e6e7ea"></div>
<div class="a" style="left:1093px;top:325px;width:1px;height:33px;background:#e6e7ea"></div>
<div class="a" style="left:1177px;top:325px;width:1px;height:33px;background:#e6e7ea"></div>
<div class="a" style="left:1312px;top:325px;width:1px;height:33px;background:#e6e7ea"></div>
<div class="a" style="left:1400px;top:325px;width:1px;height:33px;background:#e6e7ea"></div>
<div class="a" style="left:1500px;top:325px;width:1px;height:33px;background:#e6e7ea"></div>
<svg class="a" style="left:583px;top:334px" width="17" height="18" viewBox="0 0 17 18"><path d="M1 0.3 L6.6 3.3 L1 6.3 Z" fill="#1d2736"/><path d="M8.2 3.2 H11.3 C13.6 3.2 14.6 4.8 14.6 6.4 C14.6 8.2 13.4 9.6 11.3 9.6 H6.2 C4.2 9.6 3 11 3 12.8 C3 14.6 4.2 16 6.2 16 H9" fill="none" stroke="#1d2736" stroke-width="1.9"/><rect x="10.8" y="13" width="5" height="5" fill="#1d2736"/></svg>
<svg class="a" style="left:625px;top:333px" width="25" height="19" viewBox="0 0 25 19"><path d="M1.5 0 V19 M2 10.5 H24" fill="none" stroke="#2f7fb5" stroke-width="1" stroke-dasharray="1 1.2"/></svg>
<div class="t" style="left:676px;top:332px;line-height:20px;color:#1e2836">1.5</div>
<div class="t" style="left:728px;top:332px;line-height:20px;color:#1e2836">2024-12-30 11:20:14</div>
<div class="t" style="left:897px;top:332px;line-height:20px;color:#1e2836;letter-spacing:-0.9px">-----</div>
<div class="t" style="left:1011px;top:332px;line-height:20px;color:#d23fd0">11:20:14</div>
<div class="t" style="left:1103px;top:332px;line-height:20px;color:#d23fd0">11:46:29</div>
<div class="t" style="left:1187px;top:332px;line-height:20px;color:#1e2836">0:26:15</div>
<div class="t" style="left:1322px;top:332px;line-height:20px;color:#1e2836">11.04 km</div>
<div class="t" style="left:1410px;top:332px;line-height:20px;color:#68707b">101 km/h</div>
<div class="t" style="left:1510px;top:332px;line-height:20px;color:#68707b">Tiergartenstraße 117, 30559 Hannover, Niedersachsen, Germany</div>
<div class="a" style="left:572px;top:358px;width:1427px;height:33px;background:#e4eef5;border-bottom:1px solid #ebeaea"></div>
<div class="a" style="left:610px;top:358px;width:56px;height:33px;background:#fff;border-bottom:1px solid #e6e7ea"></div>
<div class="a" style="left:610px;top:358px;width:1px;height:33px;background:#e6e7ea"></div>
<div class="a" style="left:666px;top:358px;width:1px;height:33px;background:#e6e7ea"></div>
<div class="a" style="left:718px;top:358px;width:1px;height:33px;background:#e6e7ea"></div>
<div class="a" style="left:887px;top:358px;width:1px;height:33px;background:#e6e7ea"></div>
<div class="a" style="left:1001px;top:358px;width:1px;height:33px;background:#e6e7ea"></div>
<div class="a" style="left:1093px;top:358px;width:1px;height:33px;background:#e6e7ea"></div>
<div class="a" style="left:1177px;top:358px;width:1px;height:33px;background:#e6e7ea"></div>
<div class="a" style="left:1312px;top:358px;width:1px;height:33px;background:#e6e7ea"></div>
<div class="a" style="left:1400px;top:358px;width:1px;height:33px;background:#e6e7ea"></div>
<div class="a" style="left:1500px;top:358px;width:1px;height:33px;background:#e6e7ea"></div>
<svg class="a" style="left:583px;top:367px" width="17" height="18" viewBox="0 0 17 18"><path d="M1 0.3 L6.6 3.3 L1 6.3 Z" fill="#1d2736"/><path d="M8.2 3.2 H11.3 C13.6 3.2 14.6 4.8 14.6 6.4 C14.6 8.2 13.4 9.6 11.3 9.6 H6.2 C4.2 9.6 3 11 3 12.8 C3 14.6 4.2 16 6.2 16 H9" fill="none" stroke="#1d2736" stroke-width="1.9"/><rect x="10.8" y="13" width="5" height="5" fill="#1d2736"/></svg>
<svg class="a" style="left:625px;top:366px" width="25" height="19" viewBox="0 0 25 19"><path d="M1.5 0 V19 M2 10.5 H24" fill="none" stroke="#2f7fb5" stroke-width="1" stroke-dasharray="1 1.2"/></svg>
<div class="t" style="left:676px;top:365px;line-height:20px;color:#1e2836">1.6</div>
<div class="t" style="left:728px;top:365px;line-height:20px;color:#1e2836">2024-12-30 12:00:08</div>
<div class="t" style="left:897px;top:365px;line-height:20px;color:#1e2836;letter-spacing:-0.9px">-----</div>
<div class="t" style="left:1011px;top:365px;line-height:20px;color:#d23fd0">12:00:08</div>
<div class="t" style="left:1103px;top:365px;line-height:20px;color:#d23fd0">12:18:30</div>
<div class="t" style="left:1187px;top:365px;line-height:20px;color:#1e2836">0:18:22</div>
<div class="t" style="left:1322px;top:365px;line-height:20px;color:#1e2836">8.34 km</div>
<div class="t" style="left:1410px;top:365px;line-height:20px;color:#68707b">94 km/h</div>
<div class="t" style="left:1510px;top:365px;line-height:20px;color:#68707b;letter-spacing:-0.08px">Expo-Allee Nord, 30521 Hannover, Niedersachsen, Germany</div>
<div class="a" style="left:572px;top:391px;width:1427px;height:33px;background:#e4eef5;border-bottom:1px solid #ebeaea"></div>
<div class="a" style="left:610px;top:391px;width:56px;height:33px;background:#fff;border-bottom:1px solid #e6e7ea"></div>
<div class="a" style="left:610px;top:391px;width:1px;height:33px;background:#e6e7ea"></div>
<div class="a" style="left:666px;top:391px;width:1px;height:33px;background:#e6e7ea"></div>
<div class="a" style="left:718px;top:391px;width:1px;height:33px;background:#e6e7ea"></div>
<div class="a" style="left:887px;top:391px;width:1px;height:33px;background:#e6e7ea"></div>
<div class="a" style="left:1001px;top:391px;width:1px;height:33px;background:#e6e7ea"></div>
<div class="a" style="left:1093px;top:391px;width:1px;height:33px;background:#e6e7ea"></div>
<div class="a" style="left:1177px;top:391px;width:1px;height:33px;background:#e6e7ea"></div>
<div class="a" style="left:1312px;top:391px;width:1px;height:33px;background:#e6e7ea"></div>
<div class="a" style="left:1400px;top:391px;width:1px;height:33px;background:#e6e7ea"></div>
<div class="a" style="left:1500px;top:391px;width:1px;height:33px;background:#e6e7ea"></div>
<svg class="a" style="left:583px;top:400px" width="17" height="18" viewBox="0 0 17 18"><path d="M1 0.3 L6.6 3.3 L1 6.3 Z" fill="#1d2736"/><path d="M8.2 3.2 H11.3 C13.6 3.2 14.6 4.8 14.6 6.4 C14.6 8.2 13.4 9.6 11.3 9.6 H6.2 C4.2 9.6 3 11 3 12.8 C3 14.6 4.2 16 6.2 16 H9" fill="none" stroke="#1d2736" stroke-width="1.9"/><rect x="10.8" y="13" width="5" height="5" fill="#1d2736"/></svg>
<svg class="a" style="left:625px;top:399px" width="25" height="19" viewBox="0 0 25 19"><path d="M1.5 0 V19 M2 10.5 H24" fill="none" stroke="#2f7fb5" stroke-width="1" stroke-dasharray="1 1.2"/></svg>
<div class="t" style="left:676px;top:398px;line-height:20px;color:#1e2836">1.7</div>
<div class="t" style="left:728px;top:398px;line-height:20px;color:#1e2836">2024-12-30 12:41:11</div>
<div class="t" style="left:897px;top:398px;line-height:20px;color:#1e2836;letter-spacing:-0.9px">-----</div>
<div class="t" style="left:1011px;top:398px;line-height:20px;color:#d23fd0">12:41:11</div>
<div class="t" style="left:1103px;top:398px;line-height:20px;color:#d23fd0">12:45:11</div>
<div class="t" style="left:1187px;top:398px;line-height:20px;color:#1e2836">0:04:00</div>
<div class="t" style="left:1322px;top:398px;line-height:20px;color:#1e2836">1.61 km</div>
<div class="t" style="left:1410px;top:398px;line-height:20px;color:#68707b">47 km/h</div>
<div class="t" style="left:1510px;top:398px;line-height:20px;color:#68707b;letter-spacing:-0.06px">Hans-Böckler-Allee 33, 30173 Hannover, Niedersachsen, Germany</div>
<div class="a" style="left:572px;top:424px;width:1427px;height:33px;background:#e4eef5;border-bottom:1px solid #ebeaea"></div>
<div class="a" style="left:610px;top:424px;width:56px;height:33px;background:#fff;border-bottom:1px solid #e6e7ea"></div>
<div class="a" style="left:610px;top:424px;width:1px;height:33px;background:#e6e7ea"></div>
<div class="a" style="left:666px;top:424px;width:1px;height:33px;background:#e6e7ea"></div>
<div class="a" style="left:718px;top:424px;width:1px;height:33px;background:#e6e7ea"></div>
<div class="a" style="left:887px;top:424px;width:1px;height:33px;background:#e6e7ea"></div>
<div class="a" style="left:1001px;top:424px;width:1px;height:33px;background:#e6e7ea"></div>
<div class="a" style="left:1093px;top:424px;width:1px;height:33px;background:#e6e7ea"></div>
<div class="a" style="left:1177px;top:424px;width:1px;height:33px;background:#e6e7ea"></div>
<div class="a" style="left:1312px;top:424px;width:1px;height:33px;background:#e6e7ea"></div>
<div class="a" style="left:1400px;top:424px;width:1px;height:33px;background:#e6e7ea"></div>
<div class="a" style="left:1500px;top:424px;width:1px;height:33px;background:#e6e7ea"></div>
<svg class="a" style="left:583px;top:433px" width="17" height="18" viewBox="0 0 17 18"><path d="M1 0.3 L6.6 3.3 L1 6.3 Z" fill="#1d2736"/><path d="M8.2 3.2 H11.3 C13.6 3.2 14.6 4.8 14.6 6.4 C14.6 8.2 13.4 9.6 11.3 9.6 H6.2 C4.2 9.6 3 11 3 12.8 C3 14.6 4.2 16 6.2 16 H9" fill="none" stroke="#1d2736" stroke-width="1.9"/><rect x="10.8" y="13" width="5" height="5" fill="#1d2736"/></svg>
<svg class="a" style="left:625px;top:432px" width="25" height="19" viewBox="0 0 25 19"><path d="M1.5 0 V19 M2 10.5 H24" fill="none" stroke="#2f7fb5" stroke-width="1" stroke-dasharray="1 1.2"/></svg>
<div class="t" style="left:676px;top:431px;line-height:20px;color:#1e2836">1.8</div>
<div class="t" style="left:728px;top:431px;line-height:20px;color:#1e2836">2024-12-30 12:53:34</div>
<div class="t" style="left:897px;top:431px;line-height:20px;color:#1e2836;letter-spacing:-0.9px">-----</div>
<div class="t" style="left:1011px;top:431px;line-height:20px;color:#d23fd0">12:53:34</div>
<div class="t" style="left:1103px;top:431px;line-height:20px;color:#d23fd0">13:07:34</div>
<div class="t" style="left:1187px;top:431px;line-height:20px;color:#1e2836">0:14:00</div>
<div class="t" style="left:1322px;top:431px;line-height:20px;color:#1e2836">9.25 km</div>
<div class="t" style="left:1410px;top:431px;line-height:20px;color:#68707b">92 km/h</div>
<div class="t" style="left:1510px;top:431px;line-height:20px;color:#68707b;letter-spacing:-0.08px">Marienstraße 9-13, Hannover, Niedersachsen, Germany</div>
<div class="a" style="left:572px;top:457px;width:1427px;height:33px;background:#e4eef5;border-bottom:1px solid #ebeaea"></div>
<div class="a" style="left:610px;top:457px;width:56px;height:33px;background:#fff;border-bottom:1px solid #e6e7ea"></div>
<div class="a" style="left:610px;top:457px;width:1px;height:33px;background:#e6e7ea"></div>
<div class="a" style="left:666px;top:457px;width:1px;height:33px;background:#e6e7ea"></div>
<div class="a" style="left:718px;top:457px;width:1px;height:33px;background:#e6e7ea"></div>
<div class="a" style="left:887px;top:457px;width:1px;height:33px;background:#e6e7ea"></div>
<div class="a" style="left:1001px;top:457px;width:1px;height:33px;background:#e6e7ea"></div>
<div class="a" style="left:1093px;top:457px;width:1px;height:33px;background:#e6e7ea"></div>
<div class="a" style="left:1177px;top:457px;width:1px;height:33px;background:#e6e7ea"></div>
<div class="a" style="left:1312px;top:457px;width:1px;height:33px;background:#e6e7ea"></div>
<div class="a" style="left:1400px;top:457px;width:1px;height:33px;background:#e6e7ea"></div>
<div class="a" style="left:1500px;top:457px;width:1px;height:33px;background:#e6e7ea"></div>
<svg class="a" style="left:583px;top:466px" width="17" height="18" viewBox="0 0 17 18"><path d="M1 0.3 L6.6 3.3 L1 6.3 Z" fill="#1d2736"/><path d="M8.2 3.2 H11.3 C13.6 3.2 14.6 4.8 14.6 6.4 C14.6 8.2 13.4 9.6 11.3 9.6 H6.2 C4.2 9.6 3 11 3 12.8 C3 14.6 4.2 16 6.2 16 H9" fill="none" stroke="#1d2736" stroke-width="1.9"/><rect x="10.8" y="13" width="5" height="5" fill="#1d2736"/></svg>
<svg class="a" style="left:625px;top:465px" width="25" height="19" viewBox="0 0 25 19"><path d="M1.5 0 V19 M2 10.5 H24" fill="none" stroke="#2f7fb5" stroke-width="1" stroke-dasharray="1 1.2"/></svg>
<div class="t" style="left:676px;top:464px;line-height:20px;color:#1e2836">1.9</div>
<div class="t" style="left:728px;top:464px;line-height:20px;color:#1e2836">2024-12-30 13:31:33</div>
<div class="t" style="left:897px;top:464px;line-height:20px;color:#1e2836;letter-spacing:-0.9px">-----</div>
<div class="t" style="left:1011px;top:464px;line-height:20px;color:#d23fd0">13:31:33</div>
<div class="t" style="left:1103px;top:464px;line-height:20px;color:#d23fd0">13:45:39</div>
<div class="t" style="left:1187px;top:464px;line-height:20px;color:#1e2836">0:14:06</div>
<div class="t" style="left:1322px;top:464px;line-height:20px;color:#1e2836">7.20 km</div>
<div class="t" style="left:1410px;top:464px;line-height:20px;color:#68707b">96 km/h</div>
<div class="t" style="left:1510px;top:464px;line-height:20px;color:#68707b;letter-spacing:-0.12px">Elly-Beinhorn-Straße 63, 30559 Hannover, Niedersachsen, Germany</div>
<div class="a" style="left:572px;top:490px;width:1427px;height:33px;background:#e4eef5;border-bottom:1px solid #ebeaea"></div>
<div class="a" style="left:610px;top:490px;width:56px;height:33px;background:#fff;border-bottom:1px solid #e6e7ea"></div>
<div class="a" style="left:610px;top:490px;width:1px;height:33px;background:#e6e7ea"></div>
<div class="a" style="left:666px;top:490px;width:1px;height:33px;background:#e6e7ea"></div>
<div class="a" style="left:718px;top:490px;width:1px;height:33px;background:#e6e7ea"></div>
<div class="a" style="left:887px;top:490px;width:1px;height:33px;background:#e6e7ea"></div>
<div class="a" style="left:1001px;top:490px;width:1px;height:33px;background:#e6e7ea"></div>
<div class="a" style="left:1093px;top:490px;width:1px;height:33px;background:#e6e7ea"></div>
<div class="a" style="left:1177px;top:490px;width:1px;height:33px;background:#e6e7ea"></div>
<div class="a" style="left:1312px;top:490px;width:1px;height:33px;background:#e6e7ea"></div>
<div class="a" style="left:1400px;top:490px;width:1px;height:33px;background:#e6e7ea"></div>
<div class="a" style="left:1500px;top:490px;width:1px;height:33px;background:#e6e7ea"></div>
<svg class="a" style="left:583px;top:499px" width="17" height="18" viewBox="0 0 17 18"><path d="M1 0.3 L6.6 3.3 L1 6.3 Z" fill="#1d2736"/><path d="M8.2 3.2 H11.3 C13.6 3.2 14.6 4.8 14.6 6.4 C14.6 8.2 13.4 9.6 11.3 9.6 H6.2 C4.2 9.6 3 11 3 12.8 C3 14.6 4.2 16 6.2 16 H9" fill="none" stroke="#1d2736" stroke-width="1.9"/><rect x="10.8" y="13" width="5" height="5" fill="#1d2736"/></svg>
<svg class="a" style="left:625px;top:498px" width="25" height="19" viewBox="0 0 25 19"><path d="M1.5 0 V19 M2 10.5 H24" fill="none" stroke="#2f7fb5" stroke-width="1" stroke-dasharray="1 1.2"/></svg>
<div class="t" style="left:676px;top:497px;line-height:20px;color:#1e2836">1.10</div>
<div class="t" style="left:728px;top:497px;line-height:20px;color:#1e2836">2024-12-30 14:23:46</div>
<div class="t" style="left:897px;top:497px;line-height:20px;color:#1e2836;letter-spacing:-0.9px">-----</div>
<div class="t" style="left:1011px;top:497px;line-height:20px;color:#d23fd0">14:23:46</div>
<div class="t" style="left:1103px;top:497px;line-height:20px;color:#d23fd0">14:35:02</div>
<div class="t" style="left:1187px;top:497px;line-height:20px;color:#1e2836">0:11:16</div>
<div class="t" style="left:1322px;top:497px;line-height:20px;color:#1e2836">8.95 km</div>
<div class="t" style="left:1410px;top:497px;line-height:20px;color:#68707b">117 km/h</div>
<div class="t" style="left:1510px;top:497px;line-height:20px;color:#68707b;letter-spacing:-0.08px">Expo-Allee Nord, 30521 Hannover, Niedersachsen, Germany</div>
<div class="a" style="left:572px;top:523px;width:1427px;height:33px;background:#e4eef5;border-bottom:1px solid #ebeaea"></div>
<div class="a" style="left:610px;top:523px;width:56px;height:33px;background:#fff;border-bottom:1px solid #e6e7ea"></div>
<div class="a" style="left:610px;top:523px;width:1px;height:33px;background:#e6e7ea"></div>
<div class="a" style="left:666px;top:523px;width:1px;height:33px;background:#e6e7ea"></div>
<div class="a" style="left:718px;top:523px;width:1px;height:33px;background:#e6e7ea"></div>
<div class="a" style="left:887px;top:523px;width:1px;height:33px;background:#e6e7ea"></div>
<div class="a" style="left:1001px;top:523px;width:1px;height:33px;background:#e6e7ea"></div>
<div class="a" style="left:1093px;top:523px;width:1px;height:33px;background:#e6e7ea"></div>
<div class="a" style="left:1177px;top:523px;width:1px;height:33px;background:#e6e7ea"></div>
<div class="a" style="left:1312px;top:523px;width:1px;height:33px;background:#e6e7ea"></div>
<div class="a" style="left:1400px;top:523px;width:1px;height:33px;background:#e6e7ea"></div>
<div class="a" style="left:1500px;top:523px;width:1px;height:33px;background:#e6e7ea"></div>
<svg class="a" style="left:583px;top:532px" width="17" height="18" viewBox="0 0 17 18"><path d="M1 0.3 L6.6 3.3 L1 6.3 Z" fill="#1d2736"/><path d="M8.2 3.2 H11.3 C13.6 3.2 14.6 4.8 14.6 6.4 C14.6 8.2 13.4 9.6 11.3 9.6 H6.2 C4.2 9.6 3 11 3 12.8 C3 14.6 4.2 16 6.2 16 H9" fill="none" stroke="#1d2736" stroke-width="1.9"/><rect x="10.8" y="13" width="5" height="5" fill="#1d2736"/></svg>
<svg class="a" style="left:625px;top:531px" width="25" height="19" viewBox="0 0 25 19"><path d="M1.5 0 V19 M2 10.5 H24" fill="none" stroke="#2f7fb5" stroke-width="1" stroke-dasharray="1 1.2"/></svg>
<div class="t" style="left:676px;top:530px;line-height:20px;color:#1e2836">1.11</div>
<div class="t" style="left:728px;top:530px;line-height:20px;color:#1e2836">2024-12-30 15:09:43</div>
<div class="t" style="left:897px;top:530px;line-height:20px;color:#1e2836;letter-spacing:-0.9px">-----</div>
<div class="t" style="left:1011px;top:530px;line-height:20px;color:#d23fd0">15:09:43</div>
<div class="t" style="left:1103px;top:530px;line-height:20px;color:#d23fd0">15:24:31</div>
<div class="t" style="left:1187px;top:530px;line-height:20px;color:#1e2836">0:14:48</div>
<div class="t" style="left:1322px;top:530px;line-height:20px;color:#1e2836">9.12 km</div>
<div class="t" style="left:1410px;top:530px;line-height:20px;color:#68707b">96 km/h</div>
<div class="t" style="left:1510px;top:530px;line-height:20px;color:#68707b;letter-spacing:-0.12px">Elly-Beinhorn-Straße 63, 30559 Hannover, Niedersachsen, Germany</div>
<div class="a" style="left:572px;top:556px;width:1427px;height:8px;background:#e4eef5"></div>
<div class="a" style="left:610px;top:556px;width:56px;height:8px;background:#fff"></div>
<div class="a" style="left:610px;top:556px;width:1px;height:8px;background:#e6e7ea"></div>
<div class="a" style="left:666px;top:556px;width:1px;height:8px;background:#e6e7ea"></div>
<div class="a" style="left:718px;top:556px;width:1px;height:8px;background:#e6e7ea"></div>
<div class="a" style="left:887px;top:556px;width:1px;height:8px;background:#e6e7ea"></div>
<div class="a" style="left:1001px;top:556px;width:1px;height:8px;background:#e6e7ea"></div>
<div class="a" style="left:1093px;top:556px;width:1px;height:8px;background:#e6e7ea"></div>
<div class="a" style="left:1177px;top:556px;width:1px;height:8px;background:#e6e7ea"></div>
<div class="a" style="left:1312px;top:556px;width:1px;height:8px;background:#e6e7ea"></div>
<div class="a" style="left:1400px;top:556px;width:1px;height:8px;background:#e6e7ea"></div>
<div class="a" style="left:1500px;top:556px;width:1px;height:8px;background:#e6e7ea"></div>
<div class="a" style="left:572px;top:563px;width:1434px;height:34px;background:#f4f4f5;border-top:1px solid #e6e7ea;border-right:1px solid #e6e7ea"></div>
<div class="a" style="left:610px;top:563px;width:1px;height:34px;background:#e6e7ea"></div>
<div class="a" style="left:666px;top:563px;width:1px;height:34px;background:#e6e7ea"></div>
<div class="a" style="left:718px;top:563px;width:1px;height:34px;background:#e6e7ea"></div>
<div class="a" style="left:887px;top:563px;width:1px;height:34px;background:#e6e7ea"></div>
<div class="a" style="left:1001px;top:563px;width:1px;height:34px;background:#e6e7ea"></div>
<div class="a" style="left:1093px;top:563px;width:1px;height:34px;background:#e6e7ea"></div>
<div class="a" style="left:1177px;top:563px;width:1px;height:34px;background:#e6e7ea"></div>
<div class="a" style="left:1312px;top:563px;width:1px;height:34px;background:#e6e7ea"></div>
<div class="a" style="left:1400px;top:563px;width:1px;height:34px;background:#e6e7ea"></div>
<div class="a" style="left:1500px;top:563px;width:1px;height:34px;background:#e6e7ea"></div>
<div class="t" style="left:676px;top:571px;line-height:20px;-webkit-text-stroke:0.45px #1e2836">-----</div>
<div class="t" style="left:728px;top:571px;line-height:20px;-webkit-text-stroke:0.45px #1e2836">Total</div>
<div class="t" style="left:897px;top:571px;line-height:20px;-webkit-text-stroke:0.45px #1e2836">-----</div>
<div class="t" style="left:1011px;top:571px;line-height:20px;-webkit-text-stroke:0.45px #1e2836">04:01:36</div>
<div class="t" style="left:1103px;top:571px;line-height:20px;-webkit-text-stroke:0.45px #1e2836">20:40:31</div>
<div class="t" style="left:1187px;top:571px;line-height:20px;-webkit-text-stroke:0.45px #1e2836">2 days 20:18:29</div>
<div class="t" style="left:1322px;top:571px;line-height:20px;-webkit-text-stroke:0.45px #1e2836">4497 km</div>
<div class="t" style="left:1410px;top:571px;line-height:20px;-webkit-text-stroke:0.45px #1e2836">183 km/h</div>
<div class="t" style="left:1510px;top:571px;line-height:20px;letter-spacing:0.075px;-webkit-text-stroke:0.45px #1e2836">Tiergartenstraße 144, 30559 Hannover, Niedersachsen, Germany</div>
<div class="a" style="left:572px;top:592px;width:1009px;height:5px;background:#b9b9b9"></div>
<div class="a" style="left:1994px;top:155px;width:5px;height:197px;background:#bdbdbd"></div>

<!-- CHART PANEL -->
<svg class="a" style="left:590px;top:604px" width="270" height="28" viewBox="590 604 270 28">
 <g fill="none" stroke="#5a6270">
  <circle cx="601.2" cy="616.1" r="7.6" stroke-width="1.5"/>
  <path d="M606.6 621.5 L611.5 626.4" stroke-width="3"/>
  <path d="M597.6 616.3 H604.8 M601.2 612.7 V619.9" stroke-width="2.4"/>
  <circle cx="638.1" cy="616.1" r="7.6" stroke-width="1.5"/>
  <path d="M643.5 621.5 L648.4 626.4" stroke-width="3"/>
  <path d="M634.6 616.3 H641.6" stroke-width="2.6"/>
  <path d="M669.8 620.6 A7.7 7.7 0 1 0 669 614.8" stroke-width="2.1"/></g><path d="M667.4 610.6 L668.1 616.3 L673.8 615.4" fill="none" stroke="#5a6270" stroke-width="2.2"/><g fill="none" stroke="#5a6270">
  <path d="M682.3 622.3 L686.5 626.6" stroke-width="2.8"/>
  <path d="M719.8 613.8 V609 H724.2 M732.2 609 H736.8 V613.8 M719.8 621.2 V626 H724.2 M733.2 616.5 V626.5 M728.2 621.5 H738.2" stroke-width="2.2"/>
  <path d="M757.6 626.3 V611.5 C757.6 609.8 758.5 608.9 760.2 608.9 H771.6 C773.3 608.9 774.2 609.8 774.2 611.5 V620.2 C774.2 621.9 773.3 622.8 771.6 622.8 H761.5 Z" stroke-width="1.9"/>
  <path d="M760.5 613 H771.5 M760.5 616.5 H768.3" stroke-width="1.8"/>
  <rect x="793.6" y="617" width="19" height="9.8" rx="1.6" stroke-width="1.9"/>
  <path d="M797.2 618 V622.2 M800.7 618 V620.5 M804.2 618 V622.2 M807.7 618 V620.5" stroke-width="1.5"/>
  <path d="M795.5 610.5 H809.5 M797.6 608.3 L795.2 610.5 L797.6 612.7 M807.4 608.3 L809.8 610.5 L807.4 612.7" stroke-width="1.5"/>
 </g>
 <path d="M843.2 611.2 L846.8 614.8 L845.6 616 L842 612.4 Z M841.2 613.4 L844.8 617 L837.8 624 L834.2 620.4 Z M833.6 621.3 L836.9 624.6 L833 625.2 Z" fill="#5a6270"/>
 
</svg>
<div class="a" style="left:702px;top:602px;width:1px;height:32px;background:#dfe1e4"></div>
<div class="t" style="left:1322px;top:609px;line-height:20px">Chart</div>
<svg class="a" style="left:1827px;top:607px" width="22" height="21" viewBox="0 0 22 21"><path d="M5 6 V1 H17 V6" fill="none" stroke="#5a6270" stroke-width="2"/><path d="M4.5 16 H2.5 C1.5 16 1 15.5 1 14.5 V7.5 C1 6.5 1.5 6 2.5 6 H19.5 C20.5 6 21 6.5 21 7.5 V14.5 C21 15.5 20.5 16 19.5 16 H17.5" fill="none" stroke="#5a6270" stroke-width="2"/><rect x="5" y="12" width="12" height="8" fill="none" stroke="#5a6270" stroke-width="2"/></svg>
<div class="a" style="left:1864px;top:602px;width:90px;height:31px;border:1px solid #e6e7ea;border-radius:4px"></div>
<div class="t" style="left:1875px;top:609px;line-height:20px;color:#383e47">Export</div>
<svg class="a" style="left:1932px;top:613px" width="12" height="9" viewBox="0 0 12 9"><path d="M1.2 1.5 L6 6.3 L10.8 1.5" fill="none" stroke="#3a3f47" stroke-width="1.8"/></svg>
<svg class="a" style="left:1974px;top:611px" width="13" height="13" viewBox="0 0 13 13"><path d="M0.8 0.8 L12.2 12.2 M12.2 0.8 L0.8 12.2" stroke="#5a6270" stroke-width="1.5"/></svg>
<div class="a" style="left:572px;top:639px;width:1435px;height:510px;background:#ededed"></div>
<div class="a" style="left:586px;top:649px;width:1408px;height:491px;background:#fff"></div>
<svg class="a" style="left:0;top:0" width="2007" height="1192" viewBox="0 0 2007 1192">
<rect x="661.1" y="684" width="15.3" height="408.3" fill="#dbebfa"/>
<rect x="676.4" y="684" width="228.5" height="408.3" fill="#fdd4c8"/>
<rect x="904.9" y="684" width="73.0" height="408.3" fill="#fdedc1"/>
<rect x="977.9" y="684" width="438.0" height="408.3" fill="#fdd4c8"/>
<rect x="1415.9" y="684" width="32.6" height="408.3" fill="#fdedc1"/>
<rect x="1448.5" y="684" width="5.0" height="408.3" fill="#fdd4c8"/>
<rect x="1453.5" y="684" width="5.5" height="408.3" fill="#dbebfa"/>
<rect x="1459" y="684" width="65" height="408.3" fill="#fdd4c8"/>
<rect x="1524" y="684" width="145" height="408.3" fill="#fdedc1"/>
<rect x="1669" y="684" width="258" height="408.3" fill="#fdd4c8"/>
<rect x="1927" y="684" width="54.7" height="408.3" fill="#fdedc1"/>
<rect x="1195.1" y="684" width="1.4" height="408.3" fill="#e4e5ec"/>
<rect x="1201.2" y="684" width="1.4" height="408.3" fill="#e4e5ec"/>
<rect x="1210.7" y="684" width="1.4" height="408.3" fill="#e4e5ec"/>
<rect x="1218.2" y="684" width="1.4" height="408.3" fill="#e4e5ec"/>
<rect x="1223.3" y="684" width="1.4" height="408.3" fill="#e4e5ec"/>
<rect x="1240.3" y="684" width="1.4" height="408.3" fill="#e4e5ec"/>
<rect x="1243.5" y="684" width="1.4" height="408.3" fill="#e4e5ec"/>
<rect x="1286.8999999999999" y="684" width="1.4" height="408.3" fill="#e4e5ec"/>
<rect x="1391.3" y="684" width="1.4" height="408.3" fill="#e4e5ec"/>
<rect x="1410.7" y="684" width="1.4" height="408.3" fill="#e4e5ec"/>
<rect x="1413.3" y="684" width="1.4" height="408.3" fill="#e4e5ec"/>
<rect x="1449.6" y="684" width="1.4" height="408.3" fill="#e4e5ec"/>
<rect x="1459.7" y="684" width="1.4" height="408.3" fill="#e4e5ec"/>
<rect x="1469.3" y="684" width="1.4" height="408.3" fill="#e4e5ec"/>
<rect x="1865.7" y="684" width="1.4" height="408.3" fill="#e4e5ec"/>
<rect x="1874.8" y="684" width="1.4" height="408.3" fill="#e4e5ec"/>
<rect x="1883.8" y="684" width="1.4" height="408.3" fill="#e4e5ec"/>
<rect x="1896.7" y="684" width="1.4" height="408.3" fill="#e4e5ec"/>
<rect x="1909.6" y="684" width="1.4" height="408.3" fill="#e4e5ec"/>
<rect x="1912" y="684" width="2" height="408.3" fill="#ebe0e2"/>
<rect x="1919.5" y="684" width="1.4" height="408.3" fill="#e4e5ec"/>

<rect x="1923.2" y="684" width="2.2" height="408.3" fill="#ebe0e2"/>
<rect x="661.1" y="1091.7" width="1320.6" height="1" fill="rgba(60,40,40,0.045)"/>
<text x="657.5" y="1096.8" text-anchor="end" font-family="Liberation Sans" font-size="14" fill="#697079">0</text>
<rect x="661.1" y="1047.1" width="1320.6" height="1" fill="rgba(60,40,40,0.045)"/>
<text x="657.5" y="1052.2" text-anchor="end" font-family="Liberation Sans" font-size="14" fill="#697079">20</text>
<rect x="661.1" y="1002.5" width="1320.6" height="1" fill="rgba(60,40,40,0.045)"/>
<text x="657.5" y="1007.6" text-anchor="end" font-family="Liberation Sans" font-size="14" fill="#697079">40</text>
<rect x="661.1" y="957.8" width="1320.6" height="1" fill="rgba(60,40,40,0.045)"/>
<text x="657.5" y="962.9" text-anchor="end" font-family="Liberation Sans" font-size="14" fill="#697079">60</text>
<rect x="661.1" y="913.2" width="1320.6" height="1" fill="rgba(60,40,40,0.045)"/>
<text x="657.5" y="918.3" text-anchor="end" font-family="Liberation Sans" font-size="14" fill="#697079">80</text>
<rect x="661.1" y="868.6" width="1320.6" height="1" fill="rgba(60,40,40,0.045)"/>
<text x="657.5" y="873.7" text-anchor="end" font-family="Liberation Sans" font-size="14" fill="#697079">100</text>
<rect x="661.1" y="824.0" width="1320.6" height="1" fill="rgba(60,40,40,0.045)"/>
<text x="657.5" y="829.1" text-anchor="end" font-family="Liberation Sans" font-size="14" fill="#697079">120</text>
<rect x="661.1" y="779.3" width="1320.6" height="1" fill="rgba(60,40,40,0.045)"/>
<text x="657.5" y="784.4" text-anchor="end" font-family="Liberation Sans" font-size="14" fill="#697079">140</text>
<rect x="661.1" y="734.7" width="1320.6" height="1" fill="rgba(60,40,40,0.045)"/>
<text x="657.5" y="739.8" text-anchor="end" font-family="Liberation Sans" font-size="14" fill="#697079">160</text>
<rect x="661.1" y="690.1" width="1320.6" height="1" fill="rgba(60,40,40,0.045)"/>
<text x="657.5" y="695.2" text-anchor="end" font-family="Liberation Sans" font-size="14" fill="#697079">180</text>
<path d="M661.3 1092.1 L675.5 1092.1 L676.9 988.1 L678.3 1025.1 L679.7 922.8 L680.7 824.1 L681.4 769.4 L682.5 824.1 L683.2 797.7 L684.6 810.0 L686.0 804.7 L687.8 811.8 L689.2 806.5 L690.3 743.0 L692.0 801.2 L693.8 820.6 L695.6 795.9 L697.3 817.0 L699.1 810.0 L700.8 864.6 L703.7 864.6 L705.4 817.0 L707.2 780.0 L708.2 827.6 L709.7 778.3 L712.1 832.9 L714.2 810.0 L716.0 792.4 L718.5 792.4 L720.2 810.0 L723.1 829.4 L725.5 817.0 L729.0 806.5 L730.8 773.0 L732.6 769.4 L734.3 822.3 L736.8 836.4 L738.6 831.1 L740.3 841.7 L742.1 824.1 L743.9 753.6 L746.0 810.0 L747.4 824.1 L749.5 882.3 L750.9 827.6 L753.0 818.8 L754.4 758.9 L755.5 843.5 L757.3 746.5 L759.0 746.5 L760.8 799.4 L762.5 728.9 L764.3 746.5 L766.1 760.6 L768.5 691.9 L770.7 825.9 L773.1 750.0 L774.9 737.7 L777.4 801.2 L780.2 778.3 L783.7 706.0 L786.2 783.5 L788.3 778.3 L790.0 824.1 L792.5 750.0 L794.3 788.8 L796.0 757.1 L798.5 697.2 L800.3 781.8 L802.4 751.8 L804.9 834.7 L806.6 760.6 L808.4 778.3 L810.1 767.7 L812.6 760.6 L814.7 728.9 L817.2 765.9 L819.0 718.3 L820.7 739.5 L822.5 713.0 L824.3 732.4 L826.0 718.3 L827.8 811.8 L829.5 764.2 L831.3 737.7 L833.1 769.4 L834.8 778.3 L836.6 781.8 L838.4 773.0 L840.1 788.8 L841.9 776.5 L843.6 806.5 L845.4 746.5 L848.2 753.6 L850.0 797.7 L851.8 767.7 L853.2 743.0 L854.9 739.5 L856.7 728.9 L857.8 718.3 L859.5 707.7 L861.3 721.8 L863.0 707.7 L864.8 727.1 L866.6 706.0 L868.3 771.2 L870.1 706.0 L871.9 794.1 L873.6 697.2 L875.0 728.9 L876.2 711.3 L877.2 684.8 L879.0 735.9 L880.4 690.1 L882.2 684.8 L883.9 697.2 L885.0 718.3 L886.0 748.3 L887.4 693.6 L889.2 690.1 L891.0 704.2 L892.7 753.6 L894.5 757.1 L895.6 788.8 L896.6 810.0 L897.7 788.8 L899.1 797.7 L900.1 790.6 L901.5 797.7 L902.6 810.0 L903.3 1039.2 L904.7 1092.1 L977.0 1092.1 L978.4 1028.6 L980.2 947.5 L981.2 788.8 L982.6 776.5 L984.4 799.4 L986.2 758.9 L987.2 755.3 L989.0 739.5 L990.8 781.8 L992.5 804.7 L994.3 794.1 L996.0 788.8 L997.8 795.9 L999.6 790.6 L1001.3 790.6 L1003.1 794.1 L1004.9 790.6 L1006.6 795.9 L1008.4 817.0 L1010.1 815.3 L1011.9 813.5 L1013.7 795.9 L1015.4 794.1 L1016.5 817.0 L1017.9 792.4 L1019.3 788.8 L1020.7 810.0 L1021.4 891.1 L1023.5 905.2 L1025.0 936.9 L1027.1 922.8 L1029.5 905.2 L1031.3 919.3 L1033.1 912.2 L1035.5 922.8 L1037.7 894.6 L1038.7 831.1 L1040.1 811.8 L1041.9 804.7 L1043.6 898.1 L1045.1 912.2 L1046.5 817.0 L1048.2 785.3 L1049.3 771.2 L1050.7 797.7 L1052.5 810.0 L1054.2 815.3 L1056.0 817.0 L1057.8 824.1 L1059.2 852.3 L1060.6 817.0 L1062.3 815.3 L1063.7 810.0 L1065.5 804.7 L1067.3 817.0 L1069.0 811.8 L1070.8 887.6 L1071.9 891.1 L1073.6 829.4 L1075.0 831.1 L1076.2 827.6 L1077.9 841.7 L1079.7 810.0 L1080.4 764.2 L1082.2 771.2 L1083.9 765.9 L1085.7 758.9 L1087.8 758.9 L1089.2 773.0 L1091.0 774.7 L1093.1 780.0 L1094.8 824.1 L1096.6 799.4 L1099.1 797.7 L1100.8 792.4 L1101.9 781.8 L1103.7 788.8 L1105.4 799.4 L1107.2 795.9 L1108.6 802.9 L1110.4 810.0 L1112.5 818.8 L1113.9 774.7 L1115.6 781.8 L1117.4 795.9 L1118.5 790.6 L1120.2 806.5 L1122.7 820.6 L1124.5 792.4 L1126.2 797.7 L1128.0 785.3 L1129.8 773.0 L1131.5 875.2 L1133.3 866.4 L1135.0 871.7 L1136.8 877.0 L1138.9 869.9 L1140.7 862.9 L1141.7 817.0 L1144.9 781.8 L1147.4 760.6 L1149.1 756.4 L1150.9 769.4 L1152.7 760.6 L1154.8 760.6 L1156.6 771.2 L1158.3 773.0 L1160.1 778.3 L1161.5 767.7 L1163.6 771.2 L1165.4 764.2 L1167.1 769.4 L1168.9 776.5 L1170.7 773.0 L1172.4 767.7 L1173.8 757.1 L1175.2 739.5 L1177.4 748.3 L1179.5 767.7 L1181.9 788.8 L1183.7 781.8 L1185.5 792.4 L1186.2 838.2 L1187.2 813.5 L1188.3 845.3 L1190.0 880.5 L1190.8 908.7 L1192.5 880.5 L1194.3 995.1 L1195.3 1092.1 L1196.7 929.9 L1199.6 898.1 L1201.3 986.3 L1203.1 1019.8 L1204.9 922.8 L1207.3 884.0 L1209.1 986.3 L1210.1 995.1 L1211.9 988.1 L1213.0 1092.1 L1214.4 1078.0 L1215.4 996.9 L1217.2 1046.2 L1219.0 993.3 L1220.7 1092.1 L1222.5 995.1 L1224.3 1092.1 L1226.0 986.3 L1227.8 975.7 L1229.5 965.1 L1232.0 922.8 L1233.8 894.6 L1235.9 868.2 L1238.4 965.1 L1240.1 1028.6 L1241.9 995.1 L1243.6 1092.1 L1245.4 1028.6 L1247.2 1003.9 L1248.9 1007.5 L1250.7 989.8 L1252.5 972.2 L1254.9 958.1 L1256.0 1025.1 L1257.8 1003.9 L1259.5 905.2 L1261.3 880.5 L1263.0 866.4 L1264.8 922.8 L1266.6 873.5 L1268.3 859.4 L1270.1 855.8 L1273.6 855.8 L1275.0 859.4 L1275.1 954.6 L1276.9 901.7 L1279.7 905.2 L1282.2 958.1 L1283.9 929.9 L1285.7 951.0 L1287.4 1092.1 L1289.2 1056.8 L1290.6 956.3 L1292.4 993.3 L1293.8 1011.0 L1295.6 986.3 L1297.3 975.7 L1299.1 1081.5 L1300.1 975.7 L1302.6 944.0 L1305.1 905.2 L1306.8 880.5 L1308.6 869.2 L1310.7 882.3 L1313.2 884.0 L1314.2 928.1 L1315.6 878.8 L1317.4 908.7 L1319.5 912.2 L1321.3 914.0 L1323.1 899.9 L1324.8 894.6 L1326.6 894.6 L1328.3 926.4 L1330.1 915.8 L1331.9 901.7 L1333.6 891.1 L1335.4 884.0 L1336.8 880.5 L1338.6 889.3 L1340.3 885.8 L1342.1 869.9 L1344.2 875.2 L1346.7 877.0 L1348.4 921.1 L1350.2 877.0 L1352.7 866.4 L1354.4 882.3 L1355.8 928.1 L1358.0 880.5 L1360.8 868.2 L1362.5 915.8 L1364.3 919.3 L1366.1 944.0 L1367.1 903.4 L1368.9 922.8 L1370.7 986.3 L1372.1 922.8 L1373.8 915.8 L1375.6 908.7 L1377.0 958.1 L1379.1 933.4 L1380.9 965.1 L1382.6 988.1 L1384.4 975.7 L1386.5 982.8 L1388.3 989.8 L1390.0 1018.0 L1391.8 1070.9 L1393.2 1092.1 L1395.0 928.1 L1397.1 951.0 L1398.9 1067.4 L1400.6 961.6 L1402.4 958.1 L1404.2 951.0 L1405.9 972.2 L1407.7 965.1 L1409.4 947.5 L1410.9 1039.2 L1412.6 1092.1 L1414.4 1053.3 L1416.1 1092.1 L1448.9 1092.1 L1450.0 1067.4 L1451.8 1092.1 L1453.5 979.2 L1455.3 1092.1 L1457.0 1092.1 L1458.8 989.8 L1460.6 1092.1 L1462.0 1049.8 L1463.7 982.8 L1465.9 986.3 L1468.0 1011.0 L1470.1 1092.1 L1471.9 986.3 L1473.6 984.5 L1475.0 986.3 L1476.2 984.5 L1477.2 1049.8 L1478.6 972.2 L1480.4 922.8 L1481.8 914.0 L1483.2 944.0 L1484.3 965.1 L1486.0 933.4 L1487.8 929.9 L1489.2 901.7 L1490.3 929.9 L1491.3 958.1 L1492.7 933.4 L1494.5 958.1 L1495.6 995.1 L1497.3 995.1 L1498.4 905.2 L1500.1 845.3 L1501.9 817.0 L1503.7 810.0 L1505.4 795.9 L1507.9 781.8 L1509.7 769.4 L1511.4 792.4 L1513.2 845.3 L1514.9 1009.2 L1516.7 845.3 L1518.5 781.8 L1519.5 762.4 L1520.6 852.3 L1522.0 1028.6 L1523.8 1092.1 L1668.3 1092.1 L1670.8 1046.2 L1672.9 1042.7 L1674.4 1055.1 L1676.2 848.8 L1677.9 824.1 L1679.7 781.8 L1681.4 767.7 L1685.0 765.9 L1686.7 746.5 L1688.5 732.4 L1690.3 723.6 L1693.1 720.1 L1695.6 725.4 L1697.3 732.4 L1699.1 751.8 L1700.8 720.1 L1702.6 725.4 L1704.4 746.5 L1706.1 727.1 L1707.9 746.5 L1709.7 765.9 L1711.4 746.5 L1713.2 762.4 L1714.9 751.8 L1716.7 760.6 L1718.5 735.9 L1719.5 718.3 L1720.9 758.9 L1722.7 750.0 L1723.8 730.7 L1725.5 751.8 L1727.3 739.5 L1729.0 716.6 L1730.8 698.9 L1732.6 700.7 L1734.3 704.2 L1735.4 691.9 L1737.2 706.0 L1738.9 697.2 L1740.3 718.3 L1742.1 695.4 L1743.9 711.3 L1745.6 707.7 L1747.4 739.5 L1749.1 728.9 L1752.0 718.3 L1753.7 720.1 L1755.5 727.1 L1757.3 720.1 L1759.0 727.1 L1760.8 720.1 L1762.5 728.9 L1764.3 720.1 L1766.1 721.8 L1767.8 730.7 L1769.6 781.8 L1771.4 882.3 L1773.1 838.2 L1774.9 866.4 L1776.7 887.6 L1778.4 901.7 L1780.2 845.3 L1781.9 739.5 L1783.7 713.0 L1785.5 728.9 L1787.2 730.7 L1789.0 739.5 L1790.8 704.2 L1792.5 707.7 L1794.3 706.0 L1796.0 707.7 L1797.8 704.2 L1799.6 700.7 L1801.3 690.1 L1803.1 713.0 L1804.9 709.5 L1806.6 695.4 L1808.4 711.3 L1810.1 716.6 L1811.9 697.2 L1813.7 698.9 L1815.4 704.2 L1817.2 702.4 L1819.0 707.7 L1820.7 718.3 L1822.5 728.9 L1824.3 707.7 L1826.7 690.1 L1828.5 718.3 L1830.2 810.0 L1832.0 848.8 L1833.8 838.2 L1835.5 834.7 L1837.7 862.9 L1840.1 884.0 L1841.9 880.5 L1843.6 873.5 L1845.4 848.8 L1847.2 880.5 L1848.9 958.1 L1850.7 982.8 L1852.5 996.9 L1854.2 855.8 L1856.0 857.6 L1857.8 873.5 L1859.5 873.5 L1861.3 922.8 L1863.0 993.3 L1864.8 1056.8 L1866.6 1092.1 L1868.3 961.6 L1870.1 958.1 L1871.9 1003.9 L1873.6 986.3 L1875.0 993.3 L1875.2 1092.1 L1877.0 1063.9 L1879.8 986.3 L1881.2 1014.5 L1882.6 1056.8 L1883.3 1014.5 L1884.7 1092.1 L1885.8 1021.6 L1886.8 1000.4 L1888.3 988.1 L1890.0 1000.4 L1891.8 1011.0 L1893.5 1007.5 L1895.7 1056.8 L1897.4 1092.1 L1899.2 1025.1 L1900.6 1070.9 L1902.4 1019.8 L1904.1 1063.9 L1905.2 1021.6 L1906.9 1056.8 L1908.7 1070.9 L1909.8 1092.1 L1911.5 1092.1 L1913.3 1035.7 L1914.7 1056.8 L1916.1 1005.7 L1917.5 1018.0 L1918.6 1060.3 L1920.0 1092.1 L1921.0 1063.9 L1922.8 1067.4 L1924.6 1067.4 L1925.6 1092.1 L1927.4 1092.1 L1981.7 1092.1" fill="none" stroke="#1b94f3" stroke-width="2.5" stroke-linejoin="round"/>
<text x="763.1" y="1111" text-anchor="middle" font-family="Liberation Sans" font-size="14" fill="#697079">05:00</text>
<text x="763.1" y="1129" text-anchor="middle" font-family="Liberation Sans" font-size="14" fill="#697079">12-31</text>
<text x="877.6" y="1111" text-anchor="middle" font-family="Liberation Sans" font-size="14" fill="#697079">05:30</text>
<text x="877.6" y="1129" text-anchor="middle" font-family="Liberation Sans" font-size="14" fill="#697079">12-31</text>
<text x="992.0" y="1111" text-anchor="middle" font-family="Liberation Sans" font-size="14" fill="#697079">06:00</text>
<text x="992.0" y="1129" text-anchor="middle" font-family="Liberation Sans" font-size="14" fill="#697079">12-31</text>
<text x="1106.5" y="1111" text-anchor="middle" font-family="Liberation Sans" font-size="14" fill="#697079">06:30</text>
<text x="1106.5" y="1129" text-anchor="middle" font-family="Liberation Sans" font-size="14" fill="#697079">12-31</text>
<text x="1221.0" y="1111" text-anchor="middle" font-family="Liberation Sans" font-size="14" fill="#697079">07:00</text>
<text x="1221.0" y="1129" text-anchor="middle" font-family="Liberation Sans" font-size="14" fill="#697079">12-31</text>
<text x="1335.5" y="1111" text-anchor="middle" font-family="Liberation Sans" font-size="14" fill="#697079">07:30</text>
<text x="1335.5" y="1129" text-anchor="middle" font-family="Liberation Sans" font-size="14" fill="#697079">12-31</text>
<text x="1449.9" y="1111" text-anchor="middle" font-family="Liberation Sans" font-size="14" fill="#697079">08:00</text>
<text x="1449.9" y="1129" text-anchor="middle" font-family="Liberation Sans" font-size="14" fill="#697079">12-31</text>
<text x="1564.4" y="1111" text-anchor="middle" font-family="Liberation Sans" font-size="14" fill="#697079">08:30</text>
<text x="1564.4" y="1129" text-anchor="middle" font-family="Liberation Sans" font-size="14" fill="#697079">12-31</text>
<text x="1678.9" y="1111" text-anchor="middle" font-family="Liberation Sans" font-size="14" fill="#697079">09:00</text>
<text x="1678.9" y="1129" text-anchor="middle" font-family="Liberation Sans" font-size="14" fill="#697079">12-31</text>
<text x="1793.3" y="1111" text-anchor="middle" font-family="Liberation Sans" font-size="14" fill="#697079">09:30</text>
<text x="1793.3" y="1129" text-anchor="middle" font-family="Liberation Sans" font-size="14" fill="#697079">12-31</text>
<text x="1907.8" y="1111" text-anchor="middle" font-family="Liberation Sans" font-size="14" fill="#697079">10:00</text>
<text x="1907.8" y="1129" text-anchor="middle" font-family="Liberation Sans" font-size="14" fill="#697079">12-31</text>
<text transform="translate(617 888) rotate(-90)" text-anchor="middle" font-family="Liberation Sans" font-size="14" fill="#7d838b">Speed, km/h</text>
</svg>
<div class="a" style="left:1472px;top:783px;width:173px;height:61px;background:#fff;border-radius:2px;box-shadow:0 1px 3px rgba(0,0,0,0.12)"></div>
<div class="a" style="left:1472px;top:813px;width:173px;height:1px;background:#e6e7ea"></div>
<div class="t" style="left:1481px;top:788px;font-size:14px;line-height:18px;color:#1e2836">09:07:22</div>
<div class="t" style="left:1582px;top:788px;font-size:14px;line-height:18px;color:#a0a4a9">12-31</div>
<div class="a" style="left:1481px;top:827px;width:19px;height:5px;border-radius:3px;background:#2196f3"></div>
<div class="t" style="left:1518px;top:820px;font-size:14px;line-height:18px;color:#1e2836">Speed</div>
<div class="t" style="left:1576px;top:820px;font-size:14px;line-height:18px;color:#1e2836;-webkit-text-stroke:0.2px #1e2836">164 km/h</div>

<!-- FOOTER -->
<div class="a" style="left:0;top:1149px;width:2007px;height:43px;background:#fff;border-top:1px solid #e8e9eb"></div>
<svg class="a" style="left:23px;top:1162px" width="20" height="19" viewBox="0 0 20 19"><rect x="1.3" y="1.3" width="17" height="16" rx="0.8" fill="none" stroke="#1c2638" stroke-width="1.9"/><rect x="0.5" y="0.5" width="5.5" height="17.5" fill="#152033"/></svg>
<svg class="a" style="left:64px;top:1163px" width="17" height="17" viewBox="0 0 17 17" fill="#a1a7af">
<rect x="0" y="0" width="4.6" height="4.6"/><rect x="6" y="0" width="4.6" height="4.6"/><rect x="12" y="0" width="4.6" height="4.6"/>
<rect x="0" y="6" width="4.6" height="4.6"/><rect x="6" y="6" width="4.6" height="4.6"/><rect x="12" y="6" width="4.6" height="4.6"/>
<rect x="0" y="12" width="4.6" height="4.6"/><rect x="6" y="12" width="4.6" height="4.6"/><rect x="12" y="12" width="4.6" height="4.6"/>
</svg>
<div class="t" style="left:846px;top:1162px;line-height:20px;color:#1f2a3a">© Gurtam</div>
<svg class="a" style="left:1681px;top:1163px" width="21" height="17" viewBox="0 0 21 17"><rect x="0.3" y="0" width="20" height="16.5" rx="0.8" fill="#1a2334"/><rect x="1.6" y="1.3" width="17.4" height="3.8" fill="#fff"/><rect x="4.5" y="8.4" width="11" height="1.6" fill="#c9ccd1"/><rect x="4.5" y="11.8" width="6" height="1.5" fill="#fff"/></svg>
<div class="a" style="left:1707px;top:1162px;width:33px;height:19px;border-radius:10px;background:#f04a3e;color:#fff;font-size:14px;line-height:19px;text-align:center;-webkit-text-stroke:0.5px #fff">3</div>
<svg class="a" style="left:1756px;top:1160px" width="32" height="22" viewBox="1756 1160 32 22">
 <rect x="1759" y="1163.2" width="18.2" height="13.5" fill="#a3a8b0"/>
 <path d="M1759.6 1163.8 L1768.1 1171 L1776.6 1163.8" fill="none" stroke="#fff" stroke-width="1.5"/>
 <path d="M1774.3 1171 L1779.4 1166.8 V1169.6 H1785.6 V1172.4 H1779.4 V1175.2 Z" fill="#a3a8b0" stroke="#fff" stroke-width="0.9"/>
 <path d="M1782.4 1175.6 L1777.3 1171.4 V1174.2 H1771 V1177 H1777.3 V1179.8 Z" fill="#a3a8b0" stroke="#fff" stroke-width="0.9"/>
</svg>
<svg class="a" style="left:1804px;top:1163px" width="19" height="17" viewBox="0 0 19 17"><rect x="0" y="0.5" width="18.7" height="16" fill="#a3a8b0"/><rect x="1.6" y="2" width="15.5" height="13" fill="none"/><circle cx="4.6" cy="4.8" r="1.8" fill="#fff"/><path d="M1.3 15 L6.8 9.8 L10 12.2 L13.2 8.2 L17.5 15 Z" fill="#fff"/></svg>
<svg class="a" style="left:1842px;top:1165px" width="23" height="13" viewBox="0 0 23 13"><rect x="0.4" y="0" width="14.2" height="12.1" fill="#152033"/><rect x="16.1" y="0" width="6.7" height="12.1" fill="#152033"/><rect x="3.3" y="2.2" width="5.3" height="1.3" fill="#fff"/><rect x="3.3" y="5.4" width="5.3" height="1.3" fill="#fff"/><rect x="3.3" y="8.6" width="3.6" height="1.3" fill="#fff"/></svg>
<div class="t" style="left:1884px;top:1162px;line-height:20px;color:#1f2a3a">13:55:54 (+03)</div>

</body></html>
